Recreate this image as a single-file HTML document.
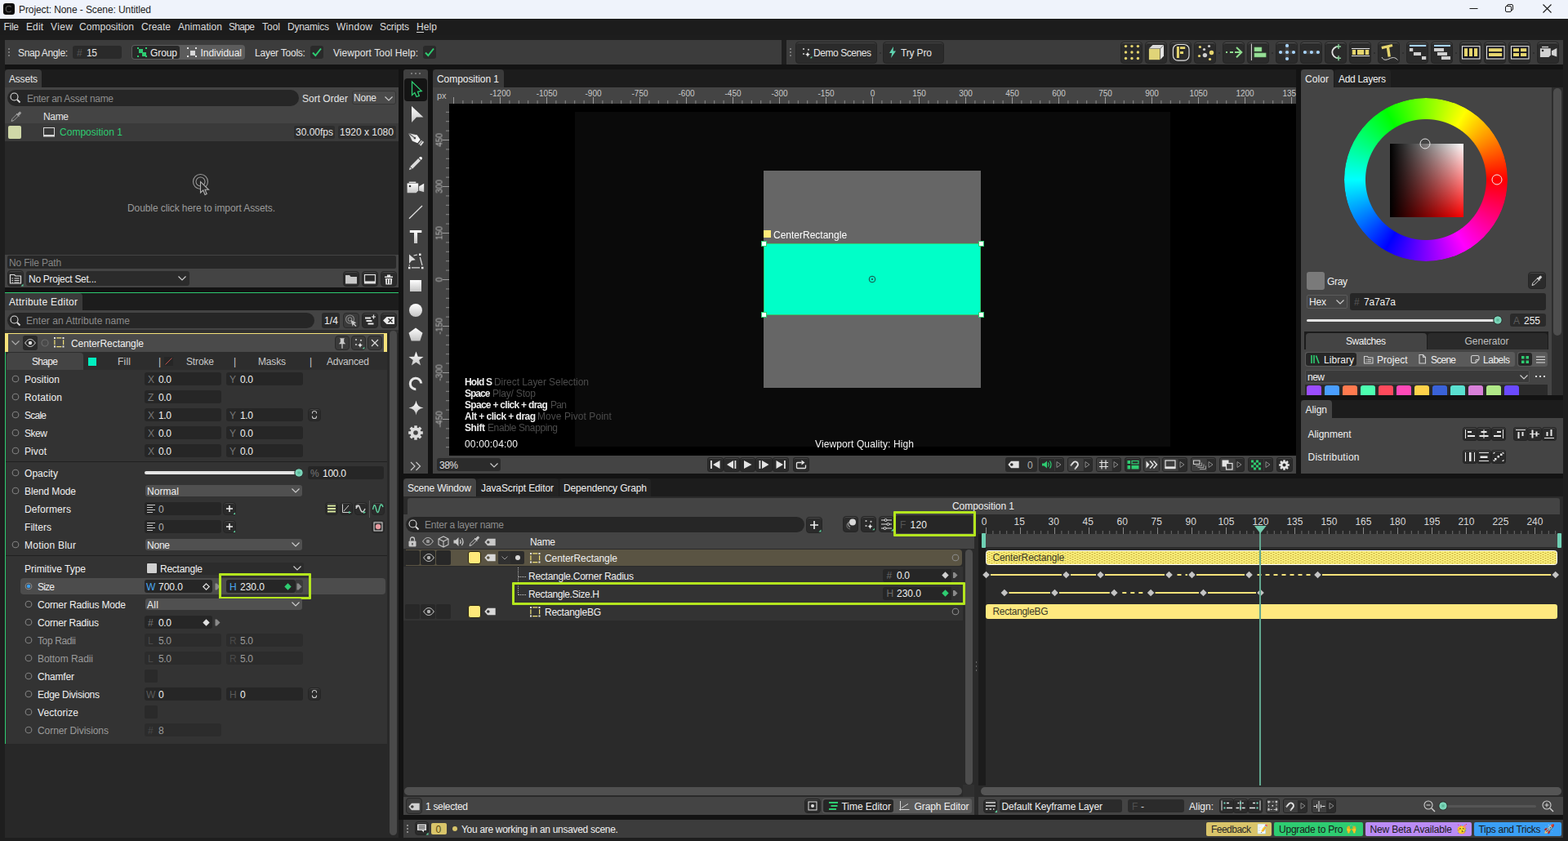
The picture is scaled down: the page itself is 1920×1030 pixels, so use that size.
<!DOCTYPE html>
<html lang="en"><head><meta charset="utf-8"><title>Project: None - Scene: Untitled</title>
<style>
html,body{margin:0;padding:0;}
body{width:1920px;height:1030px;overflow:hidden;background:#1e1e1e;position:relative;font-family:"Liberation Sans",sans-serif;font-size:12px;color:#e6e6e6;}
.a{position:absolute;}
.t{white-space:nowrap;}
svg{overflow:visible;}
</style></head>
<body>
<div class="a" style="left:0px;top:0px;width:1920px;height:23px;background:#eff3fb;"></div>
<svg class="a" style="left:4px;top:4px;" width="14" height="14" viewBox="0 0 14 14"><rect x="0" y="0" width="14" height="14" rx="3.2" fill="#0c0c0c"/><path d="M9.8 4.6 L8 3.4 L5 3.6 L3.4 5.4 L3.4 8.6 L5 10.4 L8 10.6 L9.8 9.4" fill="none" stroke="#505050" stroke-width="1.2"/></svg>
<div class="a t" style="left:23px;top:1px;height:23px;line-height:23px;color:#1a1a1a;letter-spacing:-0.09px;">Project: None - Scene: Untitled</div>
<svg class="a" style="left:1799px;top:5px;" width="12" height="12" viewBox="0 0 12 12"><path d="M0.5 5.5H10.5" stroke="#1a1a1a" stroke-width="1" fill="none"/></svg>
<svg class="a" style="left:1843px;top:5px;" width="12" height="12" viewBox="0 0 12 12"><rect x="0.5" y="2.5" width="7" height="7" rx="1.5" fill="none" stroke="#1a1a1a"/><path d="M2.5 2.5V2 Q2.5 0.5 4 0.5H8 Q9.5 0.5 9.5 2V6 Q9.5 7.5 8 7.5H7.5" fill="none" stroke="#1a1a1a"/></svg>
<svg class="a" style="left:1889px;top:5px;" width="12" height="12" viewBox="0 0 12 12"><path d="M0.5 0.5L10.5 10.5M10.5 0.5L0.5 10.5" stroke="#1a1a1a" stroke-width="1.1" fill="none"/></svg>
<div class="a" style="left:0px;top:23px;width:1920px;height:20px;background:#1c1c1c;"></div>
<div class="a" style="left:0px;top:43px;width:1920px;height:6px;background:#1d1d1d;"></div>
<div class="a" style="left:6px;top:79px;width:1908px;height:925px;background:#131313;"></div>
<div class="a t" style="left:4.5px;top:23px;height:20px;line-height:20px;color:#dcdcdc;letter-spacing:-0.28px;">File</div>
<div class="a t" style="left:32px;top:23px;height:20px;line-height:20px;color:#dcdcdc;letter-spacing:0.11px;">Edit</div>
<div class="a t" style="left:62px;top:23px;height:20px;line-height:20px;color:#dcdcdc;letter-spacing:0.40px;">View</div>
<div class="a t" style="left:97px;top:23px;height:20px;line-height:20px;color:#dcdcdc;letter-spacing:0.03px;">Composition</div>
<div class="a t" style="left:173px;top:23px;height:20px;line-height:20px;color:#dcdcdc;letter-spacing:-0.00px;">Create</div>
<div class="a t" style="left:218px;top:23px;height:20px;line-height:20px;color:#dcdcdc;letter-spacing:0.08px;">Animation</div>
<div class="a t" style="left:280px;top:23px;height:20px;line-height:20px;color:#dcdcdc;letter-spacing:-0.68px;">Shape</div>
<div class="a t" style="left:321px;top:23px;height:20px;line-height:20px;color:#dcdcdc;letter-spacing:-0.00px;">Tool</div>
<div class="a t" style="left:352px;top:23px;height:20px;line-height:20px;color:#dcdcdc;letter-spacing:-0.24px;">Dynamics</div>
<div class="a t" style="left:412px;top:23px;height:20px;line-height:20px;color:#dcdcdc;letter-spacing:0.26px;">Window</div>
<div class="a t" style="left:465px;top:23px;height:20px;line-height:20px;color:#dcdcdc;letter-spacing:-0.11px;">Scripts</div>
<div class="a t" style="left:510px;top:23px;height:20px;line-height:20px;color:#dcdcdc;letter-spacing:0.11px;">Help</div>
<div class="a" style="left:510px;top:39px;width:9px;height:1px;background:#dcdcdc;"></div>
<div class="a" style="left:6px;top:49px;width:951px;height:30px;background:#3c3c3c;"></div>
<div class="a" style="left:10px;top:59px;width:2px;height:2px;background:#777;"></div>
<div class="a" style="left:10px;top:63px;width:2px;height:2px;background:#777;"></div>
<div class="a" style="left:10px;top:67px;width:2px;height:2px;background:#777;"></div>
<div class="a t" style="left:22px;top:50px;height:30px;line-height:30px;color:#e6e6e6;letter-spacing:-0.37px;">Snap Angle:</div>
<div class="a" style="left:89px;top:56px;width:60px;height:16px;background:#2a2a2a;border-radius:3px;"></div>
<div class="a t" style="left:94px;top:57px;height:16px;line-height:16px;color:#5a5a5a;">#</div>
<div class="a t" style="left:106px;top:57px;height:16px;line-height:16px;color:#e6e6e6;letter-spacing:-0.35px;">15</div>
<div class="a" style="left:161px;top:55px;width:139px;height:18px;background:#5c5c5c;border-radius:4px;"></div>
<div class="a" style="left:162px;top:56px;width:58px;height:16px;background:#282828;border-radius:3px;"></div>
<div class="a" style="left:167.5px;top:58px;width:2px;height:2px;background:#2ecc71;"></div>
<div class="a" style="left:177.5px;top:58px;width:2px;height:2px;background:#2ecc71;"></div>
<div class="a" style="left:167.5px;top:68px;width:2px;height:2px;background:#2ecc71;"></div>
<div class="a" style="left:177.5px;top:68px;width:2px;height:2px;background:#2ecc71;"></div>
<div class="a" style="left:169.5px;top:59.5px;width:5px;height:5px;background:#2ecc71;"></div>
<div class="a" style="left:173.5px;top:63.5px;width:5px;height:5px;background:#2ecc71;"></div>
<div class="a t" style="left:184px;top:56px;height:18px;line-height:18px;color:#f0f0f0;letter-spacing:-0.09px;">Group</div>
<div class="a" style="left:229px;top:58px;width:2px;height:2px;background:#e0e0e0;"></div>
<div class="a" style="left:239px;top:58px;width:2px;height:2px;background:#e0e0e0;"></div>
<div class="a" style="left:229px;top:68px;width:2px;height:2px;background:#e0e0e0;"></div>
<div class="a" style="left:239px;top:68px;width:2px;height:2px;background:#e0e0e0;"></div>
<div class="a" style="left:232.5px;top:61.5px;width:6px;height:6px;background:#d8d8d8;"></div>
<div class="a t" style="left:245.5px;top:56px;height:18px;line-height:18px;color:#f0f0f0;letter-spacing:-0.02px;">Individual</div>
<div class="a t" style="left:312px;top:50px;height:30px;line-height:30px;color:#e6e6e6;letter-spacing:-0.23px;">Layer Tools:</div>
<div class="a" style="left:380px;top:56px;width:16px;height:16px;background:#2a2a2a;border-radius:3px;"></div>
<svg class="a" style="left:380px;top:56px;" width="16" height="16" viewBox="0 0 16 16"><path d="M3 8.5L6.3 12L13 3.5" fill="none" stroke="#2ecc71" stroke-width="2"/></svg>
<div class="a t" style="left:408px;top:50px;height:30px;line-height:30px;color:#e6e6e6;letter-spacing:0.06px;">Viewport Tool Help:</div>
<div class="a" style="left:518px;top:56px;width:16px;height:16px;background:#2a2a2a;border-radius:3px;"></div>
<svg class="a" style="left:518px;top:56px;" width="16" height="16" viewBox="0 0 16 16"><path d="M3 8.5L6.3 12L13 3.5" fill="none" stroke="#2ecc71" stroke-width="2"/></svg>
<div class="a" style="left:963px;top:49px;width:951px;height:30px;background:#3c3c3c;"></div>
<div class="a" style="left:967px;top:59px;width:2px;height:2px;background:#777;"></div>
<div class="a" style="left:967px;top:63px;width:2px;height:2px;background:#777;"></div>
<div class="a" style="left:967px;top:67px;width:2px;height:2px;background:#777;"></div>
<div class="a" style="left:974px;top:51px;width:100px;height:27px;background:#2b2b2b;border-radius:4px;border:1px solid #252525;box-sizing:border-box;box-shadow:inset 0 1px 0 rgba(255,255,255,0.13);"></div>
<svg class="a" style="left:978px;top:55px;" width="18" height="18" viewBox="0 0 18 18"><circle cx="6" cy="5" r="1.100" fill="#c8c8c8"/><circle cx="12" cy="5.800" r="1.100" fill="#c8c8c8"/><circle cx="6" cy="11" r="1.100" fill="#c8c8c8"/><path d="M11 8.200Q11.400 11.300 14.500 11.700Q11.400 12.100 11 15.200Q10.600 12.100 7.500 11.700Q10.600 11.300 11 8.200z" fill="#e8e8e8"/><path d="M16.300 16.300h-2.600l2.600-2.600z" fill="#5fd3a0"/></svg>
<div class="a t" style="left:996px;top:52px;height:27px;line-height:27px;color:#e6e6e6;letter-spacing:-0.44px;">Demo Scenes</div>
<div class="a" style="left:1077px;top:64px;width:2px;height:2px;background:#2a2a2a;border-radius:1px;"></div>
<div class="a" style="left:1081px;top:51px;width:75px;height:27px;background:#2b2b2b;border-radius:4px;border:1px solid #252525;box-sizing:border-box;box-shadow:inset 0 1px 0 rgba(255,255,255,0.13);"></div>
<svg class="a" style="left:1088px;top:57px;" width="10" height="14" viewBox="0 0 10 14"><path d="M6 0L1 8h3.2L3 14L9 5.5H5.6z" fill="#5fd3b0"/></svg>
<div class="a t" style="left:1103px;top:52px;height:27px;line-height:27px;color:#e6e6e6;letter-spacing:-0.15px;">Try Pro</div>
<div class="a" style="left:1372px;top:51px;width:27px;height:27px;background:#2b2b2b;border-radius:4px;border:1px solid #252525;box-sizing:border-box;box-shadow:inset 0 1px 0 rgba(255,255,255,0.22);"></div>
<svg class="a" style="left:1372px;top:51px;" width="27" height="27" viewBox="0 0 27 27"><circle cx="6.50" cy="5.60" r="1.700" fill="#e6d56e"/><circle cx="6.50" cy="13.05" r="1.700" fill="#e6d56e"/><circle cx="6.50" cy="20.50" r="1.700" fill="#e6d56e"/><circle cx="13.95" cy="5.60" r="1.700" fill="#e6d56e"/><circle cx="13.95" cy="13.05" r="1.700" fill="#e6d56e"/><circle cx="13.95" cy="20.50" r="1.700" fill="#e6d56e"/><circle cx="21.40" cy="5.60" r="1.700" fill="#e6d56e"/><circle cx="21.40" cy="13.05" r="1.700" fill="#e6d56e"/><circle cx="21.40" cy="20.50" r="1.700" fill="#e6d56e"/></svg>
<div class="a" style="left:1402px;top:51px;width:27px;height:27px;background:#2b2b2b;border-radius:4px;border:1px solid #252525;box-sizing:border-box;box-shadow:inset 0 1px 0 rgba(255,255,255,0.22);"></div>
<svg class="a" style="left:1402px;top:51px;" width="27" height="27" viewBox="0 0 27 27"><path d="M4.900 8.500L9.500 4H23L18.500 8.500z" fill="#dadada"/><path d="M18.800 8.800L23 4.500V17.500L18.800 22z" fill="#e4e4e4"/><rect x="4.900" y="8.850" width="13.300" height="13.350" fill="#e0d478"/></svg>
<div class="a" style="left:1432px;top:51px;width:27px;height:27px;background:#2b2b2b;border-radius:4px;border:1px solid #252525;box-sizing:border-box;box-shadow:inset 0 1px 0 rgba(255,255,255,0.22);"></div>
<svg class="a" style="left:1432px;top:51px;" width="27" height="27" viewBox="0 0 27 27"><rect x="4.400" y="3.500" width="19.600" height="19.600" rx="6" fill="none" stroke="#e4e4e4" stroke-width="1.100"/><path d="M8.900 6h3v14h-3z M13 6.200h6.200v2.900h-6.200z M13 12h4v3h-4z" fill="#e6d56e"/></svg>
<div class="a" style="left:1462px;top:51px;width:27px;height:27px;background:#2b2b2b;border-radius:4px;border:1px solid #252525;box-sizing:border-box;box-shadow:inset 0 1px 0 rgba(255,255,255,0.22);"></div>
<svg class="a" style="left:1462px;top:51px;" width="27" height="27" viewBox="0 0 27 27"><circle cx="7.400" cy="6.500" r="1.600" fill="#e6d56e"/><circle cx="18.500" cy="5.500" r="1.600" fill="#cfcfcf"/><circle cx="12.500" cy="9.500" r="1.600" fill="#cfcfcf"/><circle cx="21.500" cy="13.500" r="2.700" fill="#e6d56e"/><circle cx="13.400" cy="16.600" r="2.700" fill="#cfcfcf"/><circle cx="6.500" cy="17.500" r="1.600" fill="#e6d56e"/><circle cx="19.500" cy="21.500" r="1.600" fill="#e6d56e"/></svg>
<div class="a" style="left:1492px;top:64px;width:2px;height:2px;background:#2a2a2a;border-radius:1px;"></div>
<div class="a" style="left:1497px;top:51px;width:27px;height:27px;background:#2b2b2b;border-radius:4px;border:1px solid #252525;box-sizing:border-box;box-shadow:inset 0 1px 0 rgba(255,255,255,0.22);"></div>
<svg class="a" style="left:1497px;top:51px;" width="27" height="27" viewBox="0 0 27 27"><path d="M4 13h2M9 13h4M15 13h7.500" stroke="#8fdc8f" stroke-width="1.800" fill="none"/><path d="M17 7L23.300 13L17 19.300" stroke="#8fdc8f" stroke-width="2" fill="none"/></svg>
<div class="a" style="left:1527px;top:51px;width:27px;height:27px;background:#2b2b2b;border-radius:4px;border:1px solid #252525;box-sizing:border-box;box-shadow:inset 0 1px 0 rgba(255,255,255,0.22);"></div>
<svg class="a" style="left:1527px;top:51px;" width="27" height="27" viewBox="0 0 27 27"><path d="M5.400 2.700v20.300" stroke="#e4e4e4" stroke-width="1"/><rect x="8.900" y="6.900" width="9.100" height="5.100" fill="#98e098" stroke="#5a9a5a" stroke-width="0.500"/><rect x="8.900" y="13.900" width="14.300" height="5.100" fill="#98e098" stroke="#5a9a5a" stroke-width="0.500"/></svg>
<div class="a" style="left:1557px;top:64px;width:2px;height:2px;background:#2a2a2a;border-radius:1px;"></div>
<div class="a" style="left:1562px;top:51px;width:27px;height:27px;background:#2b2b2b;border-radius:4px;border:1px solid #252525;box-sizing:border-box;box-shadow:inset 0 1px 0 rgba(255,255,255,0.22);"></div>
<svg class="a" style="left:1562px;top:51px;" width="27" height="27" viewBox="0 0 27 27"><path d="M11.800 5h4.400v5.800h6v4.400h-6v5.800h-4.400v-5.800h-6v-4.400h6z" fill="#404040"/><circle cx="14" cy="4.900" r="2.100" fill="#a8d4fc"/><circle cx="14" cy="13" r="2.100" fill="#a8d4fc"/><circle cx="14" cy="21" r="2.100" fill="#a8d4fc"/><circle cx="6" cy="13" r="2.100" fill="#a8d4fc"/><circle cx="22" cy="13" r="2.100" fill="#a8d4fc"/></svg>
<div class="a" style="left:1592px;top:51px;width:27px;height:27px;background:#2b2b2b;border-radius:4px;border:1px solid #252525;box-sizing:border-box;box-shadow:inset 0 1px 0 rgba(255,255,255,0.22);"></div>
<svg class="a" style="left:1592px;top:51px;" width="27" height="27" viewBox="0 0 27 27"><rect x="5" y="10.800" width="18" height="4.400" rx="2" fill="#404040"/><circle cx="5.900" cy="13" r="2.100" fill="#a8d4fc"/><circle cx="13.900" cy="13" r="2.100" fill="#a8d4fc"/><circle cx="21.900" cy="13" r="2.100" fill="#a8d4fc"/></svg>
<div class="a" style="left:1622px;top:51px;width:27px;height:27px;background:#2b2b2b;border-radius:4px;border:1px solid #252525;box-sizing:border-box;box-shadow:inset 0 1px 0 rgba(255,255,255,0.22);"></div>
<svg class="a" style="left:1622px;top:51px;" width="27" height="27" viewBox="0 0 27 27"><path d="M17 5.900A7.700 7.150 0 0 0 17 20.200" fill="none" stroke="#e4e4e4" stroke-width="1.800"/><path d="M17 2.900v6M14 5.900h6M17 17.200v6M14 20.200h6" stroke="#88cc98" stroke-width="1.500" fill="none"/></svg>
<div class="a" style="left:1652px;top:51px;width:27px;height:27px;background:#2b2b2b;border-radius:4px;border:1px solid #252525;box-sizing:border-box;box-shadow:inset 0 1px 0 rgba(255,255,255,0.22);"></div>
<svg class="a" style="left:1652px;top:51px;" width="27" height="27" viewBox="0 0 27 27"><path d="M3 8.500h22.200M3 17.500h22.200" stroke="#e4e4e4" stroke-width="1.100"/><rect x="3.800" y="10" width="4.200" height="6" fill="#e6d56e"/><rect x="10" y="10" width="8.100" height="6" fill="#e6d56e"/><rect x="19.800" y="10" width="4.400" height="6" fill="#e6d56e"/></svg>
<div class="a" style="left:1682px;top:64px;width:2px;height:2px;background:#2a2a2a;border-radius:1px;"></div>
<div class="a" style="left:1687px;top:51px;width:27px;height:27px;background:#2b2b2b;border-radius:4px;border:1px solid #252525;box-sizing:border-box;box-shadow:inset 0 1px 0 rgba(255,255,255,0.22);"></div>
<svg class="a" style="left:1687px;top:51px;" width="27" height="27" viewBox="0 0 27 27"><path d="M4.800 7.600L18 4.500" stroke="#e6d56e" stroke-width="3.200" fill="none"/><path d="M12.300 6L14.200 18.500" stroke="#e6d56e" stroke-width="3.400" fill="none"/><path d="M5 19C7 23 10 22.800 14 21S21 18.500 24.500 22.500" fill="none" stroke="#d8d8d8" stroke-width="1"/></svg>
<div class="a" style="left:1717px;top:64px;width:2px;height:2px;background:#2a2a2a;border-radius:1px;"></div>
<div class="a" style="left:1722px;top:51px;width:27px;height:27px;background:#2b2b2b;border-radius:4px;border:1px solid #252525;box-sizing:border-box;box-shadow:inset 0 1px 0 rgba(255,255,255,0.22);"></div>
<svg class="a" style="left:1722px;top:51px;" width="27" height="27" viewBox="0 0 27 27"><rect x="3.900" y="3.900" width="20.300" height="2.100" fill="#a8d4fc"/><rect x="3.900" y="8" width="4.300" height="3.900" fill="#cfcfcf"/><rect x="9" y="13" width="9" height="4" fill="#cfcfcf"/><rect x="19" y="18" width="5.200" height="4" fill="#cfcfcf"/></svg>
<div class="a" style="left:1752px;top:51px;width:27px;height:27px;background:#2b2b2b;border-radius:4px;border:1px solid #252525;box-sizing:border-box;box-shadow:inset 0 1px 0 rgba(255,255,255,0.22);"></div>
<svg class="a" style="left:1752px;top:51px;" width="27" height="27" viewBox="0 0 27 27"><rect x="4" y="3.900" width="20" height="2.100" fill="#a8d4fc"/><rect x="4" y="8" width="12" height="3.900" fill="#cfcfcf"/><rect x="8" y="13" width="12" height="4" fill="#cfcfcf"/><rect x="13" y="18" width="11" height="4" fill="#cfcfcf"/></svg>
<div class="a" style="left:1782px;top:64px;width:2px;height:2px;background:#2a2a2a;border-radius:1px;"></div>
<div class="a" style="left:1787px;top:51px;width:27px;height:27px;background:#2b2b2b;border-radius:4px;border:1px solid #252525;box-sizing:border-box;box-shadow:inset 0 1px 0 rgba(255,255,255,0.22);"></div>
<svg class="a" style="left:1787px;top:51px;" width="27" height="27" viewBox="0 0 27 27"><rect x="3.500" y="5.700" width="21.500" height="15.300" fill="#15151f" stroke="#e4e4e4" stroke-width="1.100"/><rect x="6" y="8.200" width="4" height="9.800" fill="#e6d56e"/><rect x="12" y="8.200" width="4" height="9.800" fill="#e6d56e"/><rect x="18" y="8.200" width="4.200" height="9.800" fill="#e6d56e"/></svg>
<div class="a" style="left:1817px;top:51px;width:27px;height:27px;background:#2b2b2b;border-radius:4px;border:1px solid #252525;box-sizing:border-box;box-shadow:inset 0 1px 0 rgba(255,255,255,0.22);"></div>
<svg class="a" style="left:1817px;top:51px;" width="27" height="27" viewBox="0 0 27 27"><rect x="3.500" y="5.700" width="21.500" height="15.300" fill="#15151f" stroke="#e4e4e4" stroke-width="1.100"/><rect x="6" y="8.200" width="16.200" height="4" fill="#e6d56e"/><rect x="6" y="14" width="16.200" height="4" fill="#e6d56e"/></svg>
<div class="a" style="left:1847px;top:51px;width:27px;height:27px;background:#2b2b2b;border-radius:4px;border:1px solid #252525;box-sizing:border-box;box-shadow:inset 0 1px 0 rgba(255,255,255,0.22);"></div>
<svg class="a" style="left:1847px;top:51px;" width="27" height="27" viewBox="0 0 27 27"><rect x="3.500" y="5.700" width="21.500" height="15.300" fill="#15151f" stroke="#e4e4e4" stroke-width="1.100"/><rect x="6" y="8.200" width="7" height="4" fill="#e6d56e"/><rect x="15" y="8.200" width="7.200" height="4" fill="#e6d56e"/><rect x="6" y="14" width="7" height="4" fill="#e6d56e"/><rect x="15" y="14" width="7.200" height="4" fill="#e6d56e"/></svg>
<div class="a" style="left:1877px;top:64px;width:2px;height:2px;background:#2a2a2a;border-radius:1px;"></div>
<div class="a" style="left:1882px;top:51px;width:27px;height:27px;background:#2b2b2b;border-radius:4px;border:1px solid #252525;box-sizing:border-box;box-shadow:inset 0 1px 0 rgba(255,255,255,0.22);"></div>
<svg class="a" style="left:1882px;top:51px;" width="27" height="27" viewBox="0 0 27 27"><path d="M3.900 8.200h12.900v8.300l-2.400 2.500H3.900z" fill="#d2d2d2"/><path d="M18 11.300L24.300 7.900V18.600L18 16.200z" fill="#d2d2d2"/><rect x="6" y="5.900" width="8" height="1.300" fill="#d2d2d2"/><circle cx="7" cy="11" r="1.300" fill="#2b2b2b"/></svg>
<div class="a" style="left:6px;top:85px;width:482px;height:22px;background:#1c1c1c;"></div>
<div class="a" style="left:6px;top:85px;width:45px;height:22px;background:#3a3a3a;border-radius:4px 4px 0 0;"></div>
<div class="a t" style="left:11px;top:86px;height:22px;line-height:22px;color:#e6e6e6;letter-spacing:-0.20px;">Assets</div>
<div class="a" style="left:6px;top:107px;width:482px;height:45px;background:#444444;"></div>
<div class="a" style="left:9px;top:110px;width:357px;height:20px;background:#262626;border-radius:10px;"></div>
<svg class="a" style="left:12px;top:113px;" width="14" height="14" viewBox="0 0 14 14"><circle cx="5.500" cy="5.500" r="4.5" fill="none" stroke="#e0e0e0" stroke-width="1.1"/><path d="M9 9L12.5 12.5" stroke="#e0e0e0" stroke-width="1.8"/></svg>
<div class="a t" style="left:33px;top:111px;height:20px;line-height:20px;color:#8c8c8c;letter-spacing:-0.30px;">Enter an Asset name</div>
<div class="a t" style="left:370px;top:111px;height:20px;line-height:20px;color:#e6e6e6;letter-spacing:-0.00px;">Sort Order</div>
<div class="a" style="left:430.5px;top:111.3px;width:54px;height:17.2px;background:#4a4a4a;border-radius:3px;border:1px solid #353535;box-sizing:border-box;"></div>
<div class="a t" style="left:433px;top:111px;height:19px;line-height:19px;color:#e6e6e6;letter-spacing:-0.23px;">None</div>
<svg class="a" style="left:471px;top:117.5px;" width="10" height="6" viewBox="0 0 10 6"><path d="M0.5 0.5L5 5L9.5 0.5" fill="none" stroke="#d0d0d0" stroke-width="1.1"/></svg>
<svg class="a" style="left:13px;top:136px;" width="14" height="14" viewBox="0 0 14 14"><path d="M1 12.5L2 9.5L7.5 4L9.5 6L4 11.5z" fill="none" stroke="#a0a0a0" stroke-width="1"/><path d="M7 3L10.5 6.5M8.200 4.300L10.500 1.500Q11.500 0.800 12.300 1.700Q13 2.600 12 3.500L9.500 5.800z" fill="#a0a0a0" stroke="#a0a0a0" stroke-width="1"/></svg>
<div class="a t" style="left:53px;top:133px;height:20px;line-height:20px;color:#e6e6e6;letter-spacing:-0.34px;">Name</div>
<div class="a" style="left:6px;top:151px;width:482px;height:22px;background:#3a3a3a;"></div>
<div class="a" style="left:10px;top:154px;width:16px;height:16px;background:#d0d8a8;border-radius:2px;"></div>
<svg class="a" style="left:53px;top:156px;" width="15" height="12" viewBox="0 0 15 12"><rect x="0.5" y="0.5" width="13" height="9" fill="none" stroke="#d8d8d8" stroke-width="1"/><rect x="0" y="9" width="14" height="2.500" fill="#d8d8d8"/></svg>
<div class="a t" style="left:73px;top:152px;height:21px;line-height:21px;color:#2ecc71;letter-spacing:0.02px;">Composition 1</div>
<div class="a" style="left:360px;top:154px;width:50px;height:16px;background:#2d2d2d;border-radius:2px;"></div>
<div class="a t" style="left:362px;top:154px;height:17px;line-height:17px;color:#e6e6e6;letter-spacing:-0.01px;">30.00fps</div>
<div class="a" style="left:414px;top:154px;width:71px;height:16px;background:#2d2d2d;border-radius:2px;"></div>
<div class="a t" style="left:416px;top:154px;height:17px;line-height:17px;color:#e6e6e6;letter-spacing:-0.01px;">1920 x 1080</div>
<div class="a" style="left:6px;top:173px;width:482px;height:139px;background:#282828;"></div>
<svg class="a" style="left:235px;top:212px;" width="24" height="30" viewBox="0 0 24 30"><circle cx="10.5" cy="10.5" r="9" fill="none" stroke="#9a9a9a" stroke-width="1.1"/><circle cx="10.5" cy="10.5" r="5.500" fill="none" stroke="#9a9a9a" stroke-width="1.1"/><path d="M10.5 10.500V24L13.800 21L16 26.500L18.200 25.500L16 20.300H20.500z" fill="#2a2a2a" stroke="#b0b0b0" stroke-width="1.1"/></svg>
<div class="a t" style="left:156px;top:245px;height:20px;line-height:20px;color:#9a9a9a;letter-spacing:-0.09px;">Double click here to import Assets.</div>
<div class="a" style="left:6px;top:312px;width:482px;height:40px;background:#444444;"></div>
<div class="a" style="left:9px;top:313px;width:476px;height:16px;background:#272727;border-radius:2px;"></div>
<div class="a t" style="left:11px;top:314px;height:17px;line-height:17px;color:#858585;letter-spacing:-0.18px;">No File Path</div>
<div class="a" style="left:9px;top:331px;width:20px;height:20px;background:#2b2b2b;border-radius:4px;border:1px solid #252525;box-sizing:border-box;box-shadow:inset 0 1px 0 rgba(255,255,255,0.13);"></div>
<svg class="a" style="left:9px;top:331px;" width="20" height="20" viewBox="0 0 20 20"><path d="M3.5 5.500h5l1.500 1.500h6.500v9h-13z" fill="none" stroke="#e0e0e0" stroke-width="1.2"/><path d="M5.500 10h1.500M8.500 10h6M5.500 12.500h1.500M8.500 12.500h6M5.500 15h1.500M8.500 15h6" stroke="#e0e0e0" stroke-width="1.2"/><path d="M19.500 19.500h-3l3-3z" fill="#5fd3a0"/></svg>
<div class="a" style="left:32px;top:332px;width:200px;height:18px;background:#2b2b2b;border-radius:3px;"></div>
<div class="a t" style="left:35px;top:333px;height:18px;line-height:18px;color:#f0f0f0;letter-spacing:-0.27px;">No Project Set...</div>
<svg class="a" style="left:218px;top:338px;" width="10" height="6" viewBox="0 0 10 6"><path d="M0.5 0.5L5 5L9.5 0.5" fill="none" stroke="#d0d0d0" stroke-width="1.1"/></svg>
<div class="a" style="left:420px;top:332px;width:20px;height:19px;background:#2b2b2b;border-radius:4px;border:1px solid #252525;box-sizing:border-box;box-shadow:inset 0 1px 0 rgba(255,255,255,0.13);"></div>
<svg class="a" style="left:420px;top:332px;" width="20" height="19" viewBox="0 0 20 19"><path d="M3 5h5l1.500 2h7.500v8.500h-14z" fill="#c8c8c8"/></svg>
<div class="a" style="left:443px;top:332px;width:20px;height:19px;background:#2b2b2b;border-radius:4px;border:1px solid #252525;box-sizing:border-box;box-shadow:inset 0 1px 0 rgba(255,255,255,0.13);"></div>
<svg class="a" style="left:443px;top:332px;" width="20" height="19" viewBox="0 0 20 19"><rect x="3.500" y="4.500" width="13" height="8.500" fill="none" stroke="#e0e0e0" stroke-width="1.2"/><rect x="3" y="13" width="14" height="2.500" fill="#e0e0e0"/></svg>
<div class="a" style="left:466px;top:332px;width:20px;height:19px;background:#2b2b2b;border-radius:4px;border:1px solid #252525;box-sizing:border-box;box-shadow:inset 0 1px 0 rgba(255,255,255,0.13);"></div>
<svg class="a" style="left:466px;top:332px;" width="20" height="19" viewBox="0 0 20 19"><path d="M5 6.500h10v1.500h-10zM8 4.500h4v2h-4zM5.800 9h8.400l-0.600 7.500h-7.200z" fill="#e0e0e0"/><path d="M8.500 10v5.500M11.500 10v5.500" stroke="#2b2b2b" stroke-width="1"/></svg>
<div class="a" style="left:6px;top:357.7px;width:482px;height:1.5px;background:#2ecc71;"></div>
<div class="a" style="left:6px;top:359px;width:482px;height:21px;background:#1c1c1c;"></div>
<div class="a" style="left:6px;top:359px;width:95px;height:21px;background:#3a3a3a;border-radius:0 4px 0 0;"></div>
<div class="a t" style="left:11px;top:360px;height:21px;line-height:21px;color:#f0f0f0;letter-spacing:0.31px;">Attribute Editor</div>
<div class="a" style="left:6px;top:380px;width:482px;height:24px;background:#444444;"></div>
<div class="a" style="left:6px;top:404px;width:482px;height:4px;background:#303030;"></div>
<div class="a" style="left:9px;top:383px;width:376px;height:19px;background:#262626;border-radius:10px;"></div>
<svg class="a" style="left:12px;top:386px;" width="14" height="14" viewBox="0 0 14 14"><circle cx="5.500" cy="5.500" r="4.5" fill="none" stroke="#e0e0e0" stroke-width="1.1"/><path d="M9 9L12.5 12.5" stroke="#e0e0e0" stroke-width="1.8"/></svg>
<div class="a t" style="left:32px;top:384px;height:19px;line-height:19px;color:#8c8c8c;letter-spacing:0.04px;">Enter an Attribute name</div>
<div class="a" style="left:394px;top:383px;width:22px;height:19px;background:#2a2a2a;border-radius:3px;"></div>
<div class="a t" style="left:397px;top:384px;height:19px;line-height:19px;color:#f0f0f0;letter-spacing:0.16px;">1/4</div>
<div class="a" style="left:420px;top:383px;width:20px;height:19px;background:#3a3a3a;border-radius:4px;border:1px solid #2a2a2a;box-sizing:border-box;"></div>
<svg class="a" style="left:420px;top:383px;" width="20" height="19" viewBox="0 0 20 19"><circle cx="8.500" cy="8" r="5" fill="none" stroke="#8c8c8c" stroke-width="1.100"/><circle cx="8.500" cy="8" r="2.300" fill="none" stroke="#8c8c8c" stroke-width="1.100"/><path d="M9.500 9L16.500 12.200L13.700 13.200L16.500 16L15.500 17L12.700 14.200L11.700 16.800z" fill="#c4c4c4"/></svg>
<div class="a" style="left:443px;top:383px;width:20px;height:19px;background:#2b2b2b;border-radius:4px;border:1px solid #252525;box-sizing:border-box;box-shadow:inset 0 1px 0 rgba(255,255,255,0.13);"></div>
<svg class="a" style="left:443px;top:383px;" width="20" height="19" viewBox="0 0 20 19"><path d="M4 6.500h7M5.500 10h7M7.500 13.500h7" stroke="#e8e8e8" stroke-width="1.800"/><path d="M14.500 2.500v5M12 5h5" stroke="#e8e8e8" stroke-width="1.200"/></svg>
<div class="a" style="left:466px;top:383px;width:20px;height:19px;background:#2b2b2b;border-radius:4px;border:1px solid #252525;box-sizing:border-box;box-shadow:inset 0 1px 0 rgba(255,255,255,0.13);"></div>
<svg class="a" style="left:466px;top:383px;" width="20" height="19" viewBox="0 0 20 19"><path d="M3 9.500L7.500 5h9.500v9h-9.500z" fill="#e8e8e8"/><path d="M9.500 7L14.500 12M14.500 7L9.500 12" stroke="#2b2b2b" stroke-width="1.400"/></svg>
<div class="a" style="left:6px;top:408px;width:482px;height:618px;background:#282828;"></div>
<div class="a" style="left:476.5px;top:405px;width:9.5px;height:618px;background:#4a4a4a;border-radius:5px;"></div>
<div class="a" style="left:6px;top:408px;width:468px;height:23px;background:#4a4a4a;border-left:4px solid #f5e27a;border-right:4px solid #f5e27a;border-top:1px solid #f5e27a;box-sizing:border-box;"></div>
<svg class="a" style="left:14px;top:417px;" width="10" height="6" viewBox="0 0 10 6"><path d="M0.5 0.5L5 5L9.5 0.5" fill="none" stroke="#b0b0b0" stroke-width="1.1"/></svg>
<div class="a" style="left:28px;top:411px;width:18px;height:18px;background:#2a2a2a;border-radius:3px;"></div>
<svg class="a" style="left:30px;top:415px;" width="14" height="10" viewBox="0 0 14 10"><path d="M0.700 5C3 1.300 5.500 0.500 7 0.500S11 1.300 13.300 5C11 8.700 8.500 9.500 7 9.500S3 8.700 0.700 5z" fill="none" stroke="#e0e0e0" stroke-width="1"/><circle cx="7" cy="5" r="2.200" fill="#e0e0e0"/></svg>
<svg class="a" style="left:50px;top:415px;" width="10" height="10" viewBox="0 0 10 10"><circle cx="5" cy="5" r="4" fill="none" stroke="#6a6a6a" stroke-width="1.200"/></svg>
<svg class="a" style="left:66px;top:413px;" width="13" height="13" viewBox="0 0 13 13"><path d="M3.200 0.900H9.300M3.200 11.600H9.300M0.900 3.200V9.300M11.600 3.200V9.300" fill="none" stroke="#f2e27a" stroke-width="1.200"/><rect x="0" y="0" width="2" height="2" fill="#e8e8e8"/><rect x="10.500" y="0" width="2" height="2" fill="#e8e8e8"/><rect x="0" y="10.500" width="2" height="2" fill="#e8e8e8"/><rect x="10.500" y="10.500" width="2" height="2" fill="#e8e8e8"/></svg>
<div class="a t" style="left:87px;top:409px;height:24px;line-height:24px;color:#f0f0f0;letter-spacing:-0.08px;">CenterRectangle</div>
<div class="a" style="left:410px;top:411px;width:18px;height:18px;background:#3a3a3a;border-radius:4px;border:1px solid #2a2a2a;box-sizing:border-box;"></div>
<svg class="a" style="left:410px;top:411px;" width="18" height="18" viewBox="0 0 18 18"><path d="M6 3.300h6l-0.800 1.200v3.500l2 2.300h-8.400l2-2.300v-3.500z" fill="#c8c8c8"/><path d="M9 10v5.800" stroke="#c8c8c8" stroke-width="1.300"/></svg>
<div class="a" style="left:430px;top:411px;width:18px;height:18px;background:#3a3a3a;border-radius:4px;border:1px solid #2a2a2a;box-sizing:border-box;"></div>
<svg class="a" style="left:430px;top:411px;" width="18" height="18" viewBox="0 0 18 18"><circle cx="6" cy="5" r="1.100" fill="#c8c8c8"/><circle cx="12" cy="5.800" r="1.100" fill="#c8c8c8"/><circle cx="6" cy="11" r="1.100" fill="#c8c8c8"/><path d="M11 8.200Q11.400 11.300 14.500 11.700Q11.400 12.100 11 15.200Q10.600 12.100 7.500 11.700Q10.600 11.300 11 8.200z" fill="#e8e8e8"/><path d="M16.300 16.300h-2.600l2.600-2.600z" fill="#5fd3a0"/></svg>
<div class="a" style="left:450px;top:411px;width:18px;height:18px;background:#3a3a3a;border-radius:4px;border:1px solid #2a2a2a;box-sizing:border-box;"></div>
<svg class="a" style="left:450px;top:411px;" width="18" height="18" viewBox="0 0 18 18"><path d="M5 5L13 13M13 5L5 13" stroke="#e0e0e0" stroke-width="1.100"/></svg>
<div class="a" style="left:7px;top:431px;width:467px;height:22px;background:#2d2d2d;"></div>
<div class="a" style="left:8px;top:432px;width:94px;height:21px;background:#444444;border-radius:4px 4px 0 0;"></div>
<div class="a t" style="left:39px;top:433px;height:21px;line-height:21px;color:#f0f0f0;letter-spacing:-0.68px;">Shape</div>
<div class="a" style="left:108px;top:438px;width:10px;height:10px;background:#00f0c0;"></div>
<div class="a t" style="left:144px;top:433px;height:21px;line-height:21px;color:#c8c8c8;letter-spacing:0.22px;">Fill</div>
<div class="a t" style="left:194px;top:433px;height:21px;line-height:21px;color:#c8c8c8;">|</div>
<div class="a" style="left:201px;top:437px;width:11px;height:11px;background:#262626;border-radius:1px;"></div>
<svg class="a" style="left:201px;top:437px;" width="11" height="11" viewBox="0 0 11 11"><path d="M1.500 9.500L9.500 1.500" stroke="#c0504d" stroke-width="1"/></svg>
<div class="a t" style="left:228px;top:433px;height:21px;line-height:21px;color:#c8c8c8;letter-spacing:-0.14px;">Stroke</div>
<div class="a t" style="left:286px;top:433px;height:21px;line-height:21px;color:#c8c8c8;">|</div>
<div class="a t" style="left:316px;top:433px;height:21px;line-height:21px;color:#c8c8c8;letter-spacing:-0.17px;">Masks</div>
<div class="a t" style="left:379px;top:433px;height:21px;line-height:21px;color:#c8c8c8;">|</div>
<div class="a t" style="left:400px;top:433px;height:21px;line-height:21px;color:#c8c8c8;letter-spacing:-0.20px;">Advanced</div>
<div class="a" style="left:6px;top:431px;width:1px;height:480px;background:#2ecc71;"></div>
<div class="a" style="left:7px;top:453px;width:467px;height:458px;background:#333333;"></div>
<div class="a" style="left:7px;top:565px;width:467px;height:1px;background:#202020;"></div>
<div class="a" style="left:7px;top:680px;width:467px;height:1px;background:#202020;"></div>
<svg class="a" style="left:13.5px;top:459px;" width="10" height="10" viewBox="0 0 10 10"><circle cx="5" cy="5" r="3.800" fill="none" stroke="#808080" stroke-width="1.100"/></svg>
<div class="a t" style="left:30px;top:455px;height:20px;line-height:20px;color:#f0f0f0;letter-spacing:0.04px;">Position</div>
<div class="a" style="left:177px;top:456px;width:94px;height:16px;background:#262626;border-radius:3px;"></div>
<div class="a t" style="left:181px;top:457px;height:16px;line-height:16px;color:#777;">X</div>
<div class="a t" style="left:194px;top:457px;height:16px;line-height:16px;color:#f0f0f0;letter-spacing:-0.34px;">0.0</div>
<div class="a" style="left:277px;top:456px;width:94px;height:16px;background:#262626;border-radius:3px;"></div>
<div class="a t" style="left:281px;top:457px;height:16px;line-height:16px;color:#777;">Y</div>
<div class="a t" style="left:294px;top:457px;height:16px;line-height:16px;color:#f0f0f0;letter-spacing:-0.34px;">0.0</div>
<svg class="a" style="left:13.5px;top:481px;" width="10" height="10" viewBox="0 0 10 10"><circle cx="5" cy="5" r="3.800" fill="none" stroke="#808080" stroke-width="1.100"/></svg>
<div class="a t" style="left:30px;top:477px;height:20px;line-height:20px;color:#f0f0f0;letter-spacing:0.19px;">Rotation</div>
<div class="a" style="left:177px;top:478px;width:94px;height:16px;background:#262626;border-radius:3px;"></div>
<div class="a t" style="left:181px;top:479px;height:16px;line-height:16px;color:#777;">Z</div>
<div class="a t" style="left:194px;top:479px;height:16px;line-height:16px;color:#f0f0f0;letter-spacing:-0.34px;">0.0</div>
<svg class="a" style="left:13.5px;top:503px;" width="10" height="10" viewBox="0 0 10 10"><circle cx="5" cy="5" r="3.800" fill="none" stroke="#808080" stroke-width="1.100"/></svg>
<div class="a t" style="left:30px;top:499px;height:20px;line-height:20px;color:#f0f0f0;letter-spacing:-0.75px;">Scale</div>
<div class="a" style="left:177px;top:500px;width:94px;height:16px;background:#262626;border-radius:3px;"></div>
<div class="a t" style="left:181px;top:501px;height:16px;line-height:16px;color:#777;">X</div>
<div class="a t" style="left:194px;top:501px;height:16px;line-height:16px;color:#f0f0f0;letter-spacing:-0.34px;">1.0</div>
<div class="a" style="left:277px;top:500px;width:94px;height:16px;background:#262626;border-radius:3px;"></div>
<div class="a t" style="left:281px;top:501px;height:16px;line-height:16px;color:#777;">Y</div>
<div class="a t" style="left:294px;top:501px;height:16px;line-height:16px;color:#f0f0f0;letter-spacing:-0.34px;">1.0</div>
<svg class="a" style="left:13.5px;top:525px;" width="10" height="10" viewBox="0 0 10 10"><circle cx="5" cy="5" r="3.800" fill="none" stroke="#808080" stroke-width="1.100"/></svg>
<div class="a t" style="left:30px;top:521px;height:20px;line-height:20px;color:#f0f0f0;letter-spacing:-0.45px;">Skew</div>
<div class="a" style="left:177px;top:522px;width:94px;height:16px;background:#262626;border-radius:3px;"></div>
<div class="a t" style="left:181px;top:523px;height:16px;line-height:16px;color:#777;">X</div>
<div class="a t" style="left:194px;top:523px;height:16px;line-height:16px;color:#f0f0f0;letter-spacing:-0.34px;">0.0</div>
<div class="a" style="left:277px;top:522px;width:94px;height:16px;background:#262626;border-radius:3px;"></div>
<div class="a t" style="left:281px;top:523px;height:16px;line-height:16px;color:#777;">Y</div>
<div class="a t" style="left:294px;top:523px;height:16px;line-height:16px;color:#f0f0f0;letter-spacing:-0.34px;">0.0</div>
<svg class="a" style="left:13.5px;top:547px;" width="10" height="10" viewBox="0 0 10 10"><circle cx="5" cy="5" r="3.800" fill="none" stroke="#808080" stroke-width="1.100"/></svg>
<div class="a t" style="left:30px;top:543px;height:20px;line-height:20px;color:#f0f0f0;letter-spacing:0.08px;">Pivot</div>
<div class="a" style="left:177px;top:544px;width:94px;height:16px;background:#262626;border-radius:3px;"></div>
<div class="a t" style="left:181px;top:545px;height:16px;line-height:16px;color:#777;">X</div>
<div class="a t" style="left:194px;top:545px;height:16px;line-height:16px;color:#f0f0f0;letter-spacing:-0.34px;">0.0</div>
<div class="a" style="left:277px;top:544px;width:94px;height:16px;background:#262626;border-radius:3px;"></div>
<div class="a t" style="left:281px;top:545px;height:16px;line-height:16px;color:#777;">Y</div>
<div class="a t" style="left:294px;top:545px;height:16px;line-height:16px;color:#f0f0f0;letter-spacing:-0.34px;">0.0</div>
<div class="a" style="left:377px;top:500px;width:16px;height:16px;background:#2b2b2b;border-radius:4px;border:1px solid #252525;box-sizing:border-box;box-shadow:inset 0 1px 0 rgba(255,255,255,0.13);"></div>
<svg class="a" style="left:377px;top:500px;" width="16" height="16" viewBox="0 0 16 16"><path d="M5.500 6.500V5.500Q5.500 3.500 8 3.500Q10.500 3.500 10.500 5.500V6.500M5.500 9.500V10.500Q5.500 12.500 8 12.500Q10.500 12.500 10.500 10.500V9.500" fill="none" stroke="#c8c8c8" stroke-width="1.100"/></svg>
<svg class="a" style="left:13.5px;top:574px;" width="10" height="10" viewBox="0 0 10 10"><circle cx="5" cy="5" r="3.800" fill="none" stroke="#808080" stroke-width="1.100"/></svg>
<div class="a t" style="left:30px;top:570px;height:20px;line-height:20px;color:#f0f0f0;letter-spacing:0.05px;">Opacity</div>
<div class="a" style="left:177px;top:577px;width:189px;height:3.5px;background:#e4e4e4;border-radius:2px;"></div>
<svg class="a" style="left:360px;top:573px;" width="12" height="12" viewBox="0 0 12 12"><circle cx="6" cy="6" r="5.200" fill="#7ad4b8" stroke="#2a2a2a" stroke-width="1"/><circle cx="6" cy="6" r="1.800" fill="#5ab898"/></svg>
<div class="a" style="left:377px;top:571px;width:93px;height:16px;background:#262626;border-radius:3px;"></div>
<div class="a t" style="left:380px;top:572px;height:16px;line-height:16px;color:#777;">%</div>
<div class="a t" style="left:395px;top:572px;height:16px;line-height:16px;color:#f0f0f0;letter-spacing:-0.26px;">100.0</div>
<svg class="a" style="left:13.5px;top:596px;" width="10" height="10" viewBox="0 0 10 10"><circle cx="5" cy="5" r="3.800" fill="none" stroke="#808080" stroke-width="1.100"/></svg>
<div class="a t" style="left:30px;top:592px;height:20px;line-height:20px;color:#f0f0f0;letter-spacing:-0.12px;">Blend Mode</div>
<div class="a" style="left:177.8px;top:594px;width:192.5px;height:14.3px;background:#505050;border-radius:3px;"></div>
<div class="a t" style="left:180px;top:594px;height:16px;line-height:16px;color:#f0f0f0;letter-spacing:0.07px;">Normal</div>
<svg class="a" style="left:357px;top:598px;" width="10" height="6" viewBox="0 0 10 6"><path d="M0.5 0.5L5 5L9.5 0.5" fill="none" stroke="#d0d0d0" stroke-width="1.1"/></svg>
<div class="a t" style="left:30px;top:614px;height:20px;line-height:20px;color:#f0f0f0;letter-spacing:0.12px;">Deformers</div>
<div class="a" style="left:177px;top:615px;width:94px;height:16px;background:#262626;border-radius:3px;"></div>
<svg class="a" style="left:180px;top:618px;" width="10" height="11" viewBox="0 0 10 11"><path d="M0 0.500h10M0 3.500h7M0 6.500h10M0 9.500h7" stroke="#c8c8c8" stroke-width="1"/></svg>
<div class="a t" style="left:194px;top:616px;height:16px;line-height:16px;color:#b0b0b0;">0</div>
<div class="a" style="left:273px;top:615px;width:16px;height:16px;background:#2b2b2b;border-radius:4px;border:1px solid #252525;box-sizing:border-box;box-shadow:inset 0 1px 0 rgba(255,255,255,0.13);"></div>
<svg class="a" style="left:273px;top:615px;" width="16" height="16" viewBox="0 0 16 16"><path d="M8 4v8M4 8h8" stroke="#f0f0f0" stroke-width="1.500"/><path d="M15 15h-2.500l2.500-2.500z" fill="#5fd3a0"/></svg>
<div class="a t" style="left:30px;top:636px;height:20px;line-height:20px;color:#f0f0f0;letter-spacing:0.06px;">Filters</div>
<div class="a" style="left:177px;top:637px;width:94px;height:16px;background:#262626;border-radius:3px;"></div>
<svg class="a" style="left:180px;top:640px;" width="10" height="11" viewBox="0 0 10 11"><path d="M0 0.500h10M0 3.500h7M0 6.500h10M0 9.500h7" stroke="#c8c8c8" stroke-width="1"/></svg>
<div class="a t" style="left:194px;top:638px;height:16px;line-height:16px;color:#b0b0b0;">0</div>
<div class="a" style="left:273px;top:637px;width:16px;height:16px;background:#2b2b2b;border-radius:4px;border:1px solid #252525;box-sizing:border-box;box-shadow:inset 0 1px 0 rgba(255,255,255,0.13);"></div>
<svg class="a" style="left:273px;top:637px;" width="16" height="16" viewBox="0 0 16 16"><path d="M8 4v8M4 8h8" stroke="#f0f0f0" stroke-width="1.500"/><path d="M15 15h-2.500l2.500-2.500z" fill="#5fd3a0"/></svg>
<div class="a" style="left:398px;top:615px;width:16px;height:16px;background:#2b2b2b;border-radius:4px;border:1px solid #252525;box-sizing:border-box;box-shadow:inset 0 1px 0 rgba(255,255,255,0.13);"></div>
<svg class="a" style="left:398px;top:615px;" width="16" height="16" viewBox="0 0 16 16"><path d="M3 4.500h10M3 8h10M3 11.500h10" stroke="#d8e8a0" stroke-width="2"/></svg>
<div class="a" style="left:416px;top:615px;width:16px;height:16px;background:#2b2b2b;border-radius:4px;border:1px solid #252525;box-sizing:border-box;box-shadow:inset 0 1px 0 rgba(255,255,255,0.13);"></div>
<svg class="a" style="left:416px;top:615px;" width="16" height="16" viewBox="0 0 16 16"><path d="M3.500 2.500v10h10" fill="none" stroke="#d0d0d0" stroke-width="1"/><path d="M5 11L11 4" stroke="#d0d0d0" stroke-width="1"/><path d="M11 11l3 1.500-3 1.500z" fill="#5fd3a0"/></svg>
<div class="a" style="left:434px;top:615px;width:16px;height:16px;background:#2b2b2b;border-radius:4px;border:1px solid #252525;box-sizing:border-box;box-shadow:inset 0 1px 0 rgba(255,255,255,0.13);"></div>
<svg class="a" style="left:434px;top:615px;" width="16" height="16" viewBox="0 0 16 16"><path d="M2 8Q4.500 0 7 8T13 8" fill="none" stroke="#d0d0d0" stroke-width="1.400"/><circle cx="3" cy="5" r="1.600" fill="#d0d0d0"/><path d="M11 11l3 1.500-3 1.500z" fill="#5fd3a0"/></svg>
<div class="a" style="left:452px;top:613px;width:1px;height:21px;background:#5a5a5a;"></div>
<div class="a" style="left:455px;top:615px;width:16px;height:16px;background:#2b2b2b;border-radius:4px;border:1px solid #252525;box-sizing:border-box;box-shadow:inset 0 1px 0 rgba(255,255,255,0.13);"></div>
<svg class="a" style="left:455px;top:615px;" width="16" height="16" viewBox="0 0 16 16"><path d="M1.500 9Q3.500 -1 5.500 8T9.500 8T14 6" fill="none" stroke="#5fd3a0" stroke-width="1.400"/></svg>
<div class="a" style="left:455px;top:637px;width:16px;height:16px;background:#2b2b2b;border-radius:4px;border:1px solid #252525;box-sizing:border-box;box-shadow:inset 0 1px 0 rgba(255,255,255,0.13);"></div>
<svg class="a" style="left:455px;top:637px;" width="16" height="16" viewBox="0 0 16 16"><rect x="3" y="3" width="10" height="10" fill="none" stroke="#e0e0e0" stroke-width="1"/><circle cx="8" cy="8" r="3.200" fill="#e89aa0"/></svg>
<svg class="a" style="left:13.5px;top:662px;" width="10" height="10" viewBox="0 0 10 10"><circle cx="5" cy="5" r="3.800" fill="none" stroke="#808080" stroke-width="1.100"/></svg>
<div class="a t" style="left:30px;top:658px;height:20px;line-height:20px;color:#f0f0f0;letter-spacing:0.23px;">Motion Blur</div>
<div class="a" style="left:177.8px;top:660px;width:192.5px;height:14.3px;background:#505050;border-radius:3px;"></div>
<div class="a t" style="left:180px;top:660px;height:16px;line-height:16px;color:#f0f0f0;letter-spacing:-0.23px;">None</div>
<svg class="a" style="left:357px;top:664px;" width="10" height="6" viewBox="0 0 10 6"><path d="M0.5 0.5L5 5L9.5 0.5" fill="none" stroke="#d0d0d0" stroke-width="1.1"/></svg>
<div class="a t" style="left:30px;top:687px;height:20px;line-height:20px;color:#f0f0f0;letter-spacing:-0.01px;">Primitive Type</div>
<div class="a" style="left:178.5px;top:688.5px;width:193.5px;height:15px;background:#2c2c2c;border-radius:3px;"></div>
<div class="a" style="left:180px;top:690px;width:12px;height:12px;background:#d0d0d0;border-radius:1px;"></div>
<div class="a t" style="left:196px;top:689px;height:16px;line-height:16px;color:#f0f0f0;letter-spacing:-0.25px;">Rectangle</div>
<svg class="a" style="left:359px;top:693px;" width="10" height="6" viewBox="0 0 10 6"><path d="M0.5 0.5L5 5L9.5 0.5" fill="none" stroke="#d0d0d0" stroke-width="1.1"/></svg>
<div class="a" style="left:25px;top:708px;width:447px;height:20px;background:#4c4c4c;border-radius:4px;"></div>
<svg class="a" style="left:29.5px;top:713px;" width="10" height="10" viewBox="0 0 10 10"><circle cx="5" cy="5" r="3.800" fill="none" stroke="#8a8a8a" stroke-width="1.100"/><circle cx="5" cy="5" r="2.200" fill="#3aa0f0"/></svg>
<div class="a t" style="left:46px;top:709px;height:20px;line-height:20px;color:#f0f0f0;letter-spacing:-0.78px;">Size</div>
<div class="a" style="left:177px;top:710px;width:83px;height:16px;background:#262626;border-radius:3px;"></div>
<div class="a t" style="left:179px;top:711px;height:16px;line-height:16px;color:#4aa8f0;">W</div>
<div class="a t" style="left:194px;top:711px;height:16px;line-height:16px;color:#f0f0f0;letter-spacing:-0.01px;">700.0</div>
<svg class="a" style="left:248px;top:714px;" width="9" height="9" viewBox="0 0 9 9"><path d="M4.500 0.800L8.200 4.500L4.500 8.200L0.800 4.500z" fill="none" stroke="#e0e0e0" stroke-width="1.200"/></svg>
<svg class="a" style="left:263px;top:714px;" width="7" height="9" viewBox="0 0 7 9"><path d="M0.500 0.500h2l4 4-4 4h-2z" fill="#8a8a8a"/></svg>
<div class="a" style="left:277px;top:710px;width:85px;height:16px;background:#262626;border-radius:3px;"></div>
<div class="a t" style="left:281px;top:711px;height:16px;line-height:16px;color:#4aa8f0;">H</div>
<div class="a t" style="left:294px;top:711px;height:16px;line-height:16px;color:#f0f0f0;letter-spacing:-0.01px;">230.0</div>
<div class="a" style="left:362px;top:710px;width:9px;height:16px;background:#3a3a3a;border-radius:0 3px 3px 0;"></div>
<svg class="a" style="left:348px;top:714px;" width="9" height="9" viewBox="0 0 9 9"><path d="M4.500 0.300L8.700 4.500L4.500 8.700L0.300 4.500z" fill="#2ecc71"/></svg>
<svg class="a" style="left:363px;top:714px;" width="7" height="9" viewBox="0 0 7 9"><path d="M0.500 0.500h2l4 4-4 4h-2z" fill="#8a8a8a"/></svg>
<div class="a" style="left:268px;top:702px;width:113px;height:32px;border-radius:1px;border:3px solid #b4e61e;box-sizing:border-box;"></div>
<svg class="a" style="left:29.5px;top:735px;" width="10" height="10" viewBox="0 0 10 10"><circle cx="5" cy="5" r="3.800" fill="none" stroke="#808080" stroke-width="1.100"/></svg>
<div class="a t" style="left:46px;top:731px;height:20px;line-height:20px;color:#f0f0f0;letter-spacing:-0.16px;">Corner Radius Mode</div>
<div class="a" style="left:177.8px;top:733px;width:192.5px;height:14.3px;background:#505050;border-radius:3px;"></div>
<div class="a t" style="left:180px;top:733px;height:16px;line-height:16px;color:#f0f0f0;letter-spacing:0.33px;">All</div>
<svg class="a" style="left:357px;top:737px;" width="10" height="6" viewBox="0 0 10 6"><path d="M0.5 0.5L5 5L9.5 0.5" fill="none" stroke="#d0d0d0" stroke-width="1.1"/></svg>
<svg class="a" style="left:29.5px;top:757px;" width="10" height="10" viewBox="0 0 10 10"><circle cx="5" cy="5" r="3.800" fill="none" stroke="#808080" stroke-width="1.100"/></svg>
<div class="a t" style="left:46px;top:753px;height:20px;line-height:20px;color:#f0f0f0;letter-spacing:-0.20px;">Corner Radius</div>
<div class="a" style="left:177px;top:754px;width:83px;height:16px;background:#262626;border-radius:3px;"></div>
<div class="a t" style="left:181px;top:755px;height:16px;line-height:16px;color:#777;">#</div>
<div class="a t" style="left:194px;top:755px;height:16px;line-height:16px;color:#f0f0f0;letter-spacing:-0.34px;">0.0</div>
<svg class="a" style="left:248px;top:758px;" width="9" height="9" viewBox="0 0 9 9"><path d="M4.500 0.300L8.700 4.500L4.500 8.700L0.300 4.500z" fill="#e0e0e0"/></svg>
<svg class="a" style="left:263px;top:758px;" width="7" height="9" viewBox="0 0 7 9"><path d="M0.500 0.500h2l4 4-4 4h-2z" fill="#8a8a8a"/></svg>
<svg class="a" style="left:29.5px;top:779px;" width="10" height="10" viewBox="0 0 10 10"><circle cx="5" cy="5" r="3.800" fill="none" stroke="#808080" stroke-width="1.100"/></svg>
<div class="a t" style="left:46px;top:775px;height:20px;line-height:20px;color:#9a9a9a;letter-spacing:-0.38px;">Top Radii</div>
<div class="a" style="left:177px;top:776px;width:94px;height:16px;background:#2c2c2c;border-radius:3px;"></div>
<div class="a t" style="left:181px;top:777px;height:16px;line-height:16px;color:#4a4a4a;">L</div>
<div class="a t" style="left:194px;top:777px;height:16px;line-height:16px;color:#9a9a9a;letter-spacing:-0.34px;">5.0</div>
<div class="a" style="left:277px;top:776px;width:94px;height:16px;background:#2c2c2c;border-radius:3px;"></div>
<div class="a t" style="left:281px;top:777px;height:16px;line-height:16px;color:#4a4a4a;">R</div>
<div class="a t" style="left:294px;top:777px;height:16px;line-height:16px;color:#9a9a9a;letter-spacing:-0.34px;">5.0</div>
<svg class="a" style="left:29.5px;top:801px;" width="10" height="10" viewBox="0 0 10 10"><circle cx="5" cy="5" r="3.800" fill="none" stroke="#808080" stroke-width="1.100"/></svg>
<div class="a t" style="left:46px;top:797px;height:20px;line-height:20px;color:#9a9a9a;letter-spacing:-0.06px;">Bottom Radii</div>
<div class="a" style="left:177px;top:798px;width:94px;height:16px;background:#2c2c2c;border-radius:3px;"></div>
<div class="a t" style="left:181px;top:799px;height:16px;line-height:16px;color:#4a4a4a;">L</div>
<div class="a t" style="left:194px;top:799px;height:16px;line-height:16px;color:#9a9a9a;letter-spacing:-0.34px;">5.0</div>
<div class="a" style="left:277px;top:798px;width:94px;height:16px;background:#2c2c2c;border-radius:3px;"></div>
<div class="a t" style="left:281px;top:799px;height:16px;line-height:16px;color:#4a4a4a;">R</div>
<div class="a t" style="left:294px;top:799px;height:16px;line-height:16px;color:#9a9a9a;letter-spacing:-0.34px;">5.0</div>
<svg class="a" style="left:29.5px;top:823px;" width="10" height="10" viewBox="0 0 10 10"><circle cx="5" cy="5" r="3.800" fill="none" stroke="#808080" stroke-width="1.100"/></svg>
<div class="a t" style="left:46px;top:819px;height:20px;line-height:20px;color:#f0f0f0;letter-spacing:-0.17px;">Chamfer</div>
<div class="a" style="left:177px;top:820px;width:16px;height:16px;background:#2a2a2a;border-radius:2px;"></div>
<svg class="a" style="left:29.5px;top:845px;" width="10" height="10" viewBox="0 0 10 10"><circle cx="5" cy="5" r="3.800" fill="none" stroke="#808080" stroke-width="1.100"/></svg>
<div class="a t" style="left:46px;top:841px;height:20px;line-height:20px;color:#f0f0f0;letter-spacing:-0.26px;">Edge Divisions</div>
<div class="a" style="left:177px;top:842px;width:94px;height:16px;background:#262626;border-radius:3px;"></div>
<div class="a t" style="left:179px;top:843px;height:16px;line-height:16px;color:#5a5a5a;">W</div>
<div class="a t" style="left:194px;top:843px;height:16px;line-height:16px;color:#f0f0f0;">0</div>
<div class="a" style="left:277px;top:842px;width:94px;height:16px;background:#262626;border-radius:3px;"></div>
<div class="a t" style="left:281px;top:843px;height:16px;line-height:16px;color:#5a5a5a;">H</div>
<div class="a t" style="left:294px;top:843px;height:16px;line-height:16px;color:#f0f0f0;">0</div>
<div class="a" style="left:377px;top:842px;width:16px;height:16px;background:#2b2b2b;border-radius:4px;border:1px solid #252525;box-sizing:border-box;box-shadow:inset 0 1px 0 rgba(255,255,255,0.13);"></div>
<svg class="a" style="left:377px;top:842px;" width="16" height="16" viewBox="0 0 16 16"><path d="M5.500 6.500V5.500Q5.500 3.500 8 3.500Q10.500 3.500 10.500 5.500V6.500M5.500 9.500V10.500Q5.500 12.500 8 12.500Q10.500 12.500 10.500 10.500V9.500" fill="none" stroke="#c8c8c8" stroke-width="1.100"/></svg>
<svg class="a" style="left:29.5px;top:867px;" width="10" height="10" viewBox="0 0 10 10"><circle cx="5" cy="5" r="3.800" fill="none" stroke="#808080" stroke-width="1.100"/></svg>
<div class="a t" style="left:46px;top:863px;height:20px;line-height:20px;color:#f0f0f0;letter-spacing:0.08px;">Vectorize</div>
<div class="a" style="left:177px;top:864px;width:16px;height:16px;background:#2a2a2a;border-radius:2px;"></div>
<svg class="a" style="left:29.5px;top:889px;" width="10" height="10" viewBox="0 0 10 10"><circle cx="5" cy="5" r="3.800" fill="none" stroke="#808080" stroke-width="1.100"/></svg>
<div class="a t" style="left:46px;top:885px;height:20px;line-height:20px;color:#9a9a9a;letter-spacing:-0.07px;">Corner Divisions</div>
<div class="a" style="left:177px;top:886px;width:94px;height:16px;background:#2c2c2c;border-radius:3px;"></div>
<div class="a t" style="left:181px;top:887px;height:16px;line-height:16px;color:#4a4a4a;">#</div>
<div class="a t" style="left:194px;top:887px;height:16px;line-height:16px;color:#9a9a9a;">8</div>
<div class="a" style="left:494px;top:85px;width:30px;height:495px;background:#404040;border-radius:3px 3px 0 0;"></div>
<div class="a" style="left:503px;top:89px;width:2px;height:2px;background:#7a7a7a;"></div>
<div class="a" style="left:508px;top:89px;width:2px;height:2px;background:#7a7a7a;"></div>
<div class="a" style="left:513px;top:89px;width:2px;height:2px;background:#7a7a7a;"></div>
<div class="a" style="left:495px;top:96px;width:28px;height:28px;background:#141414;border-radius:4px;"></div>
<svg class="a" style="left:0;top:0" width="0" height="0"><defs><linearGradient id="gsq" x1="0" y1="0" x2="0" y2="1"><stop offset="0" stop-color="#ffffff"/><stop offset="1" stop-color="#c4c4c4"/></linearGradient></defs></svg>
<svg class="a" style="left:494px;top:85px;" width="30" height="40" viewBox="0 0 30 40"><path d="M10.500 15L10.500 31.500L13.800 28.500L16 33.500L19.300 32.300L17.500 27.300L22.300 26.500z" fill="none" stroke="#2ecc71" stroke-width="1.300" stroke-linejoin="miter"/></svg>
<svg class="a" style="left:494px;top:125px;" width="30" height="30" viewBox="0 0 30 30"><path d="M10 5V25L16 18.500H24.400z" fill="url(#gsq)"/></svg>
<svg class="a" style="left:498.0px;top:159.0px;" width="22" height="22" viewBox="0 0 22 22"><g transform="rotate(128 11 11)"><path d="M11 22.500L6.300 12.500L8.300 6h5.400l2 6.500z" fill="url(#gsq)"/><path d="M11 22V13.500" stroke="#444" stroke-width="1"/><circle cx="11" cy="12.500" r="1.300" fill="#444"/><rect x="8" y="3.300" width="6" height="1.200" fill="#dcdcdc"/><rect x="8" y="0.500" width="6" height="2" fill="#dcdcdc"/></g></svg>
<svg class="a" style="left:498.0px;top:189.0px;" width="22" height="22" viewBox="0 0 22 22"><g transform="rotate(45 11 11)"><path d="M9 3.500Q9 0.500 11 0.500Q13 0.500 13 3.500z" fill="#ffffff"/><rect x="9" y="4.500" width="4" height="14" fill="#dcdcdc"/><path d="M9.300 19.300h3.400l-1.700 3.200z" fill="#dcdcdc"/></g></svg>
<svg class="a" style="left:494px;top:215px;" width="30" height="30" viewBox="0 0 30 30"><path d="M4.600 9.500h13.600v9l-2.700 2.700H4.600z" fill="url(#gsq)"/><path d="M19.100 13.200L25.200 9.700V20.300L19.100 18.500z" fill="url(#gsq)"/><rect x="6.800" y="7.600" width="8.500" height="1.300" fill="#f0f0f0"/><circle cx="8" cy="13" r="1.300" fill="#333"/></svg>
<svg class="a" style="left:494px;top:245px;" width="30" height="30" viewBox="0 0 30 30"><path d="M7 22.800L23 7" stroke="#e4e4e4" stroke-width="1.300"/></svg>
<svg class="a" style="left:494px;top:275px;" width="30" height="30" viewBox="0 0 30 30"><path d="M7.800 6.900h14.500v3.200h-5.200v12.800h-4.100V10.100H7.800z" fill="url(#gsq)"/></svg>
<svg class="a" style="left:494px;top:305px;" width="30" height="30" viewBox="0 0 30 30"><path d="M7 6.500V18L10 14.300L14.800 13.300z" fill="#dcdcdc"/><path d="M12.500 8L17 7M20.300 10L23 20M10 22.800H20" stroke="#dcdcdc" stroke-width="1.200" fill="none"/><rect x="19" y="5.500" width="2.500" height="2.500" fill="#f4f4f4"/><rect x="6" y="21.800" width="2.500" height="2.500" fill="#f4f4f4"/><rect x="22" y="21.800" width="2.500" height="2.500" fill="#f4f4f4"/><rect x="6.800" y="19.300" width="1.200" height="1.200" fill="#f4f4f4"/></svg>
<svg class="a" style="left:502px;top:343px" width="14" height="14"><rect width="14" height="14" fill="url(#gsq)"/></svg>
<svg class="a" style="left:501px;top:372px" width="16" height="16"><circle cx="8" cy="8" r="8" fill="url(#gsq)"/></svg>
<svg class="a" style="left:500px;top:401px" width="18" height="17"><path d="M9 0.500L17.500 6.700L14.300 16.500H3.700L0.500 6.700z" fill="url(#gsq)"/></svg>
<svg class="a" style="left:499.500px;top:430px" width="19" height="18"><path d="M9.500 0.500L11.800 6.800L18.500 7L13.200 11.100L15.100 17.500L9.500 13.800L3.900 17.500L5.800 11.100L0.500 7L7.200 6.800z" fill="url(#gsq)"/></svg>
<svg class="a" style="left:498.0px;top:459.0px;" width="22" height="22" viewBox="0 0 22 22"><path d="M17.700 10.500A6.700 6.700 0 1 0 11.300 17.700" fill="none" stroke="#e6e6e6" stroke-width="3"/></svg>
<svg class="a" style="left:499.500px;top:490px" width="19" height="19"><path d="M9.500 0.500Q10.500 8.500 18.500 9.500Q10.500 10.500 9.500 18.500Q8.500 10.500 0.500 9.500Q8.500 8.500 9.500 0.500z" fill="url(#gsq)"/></svg>
<svg class="a" style="left:500px;top:521px;" width="18" height="18" viewBox="0 0 18 18"><path d="M17.82,7.21L17.82,10.79L15.28,10.69L14.63,12.25L16.50,13.97L13.97,16.50L12.24,14.63L10.69,15.28L10.79,17.82L7.21,17.82L7.31,15.28L5.75,14.63L4.03,16.50L1.50,13.97L3.37,12.24L2.72,10.69L0.18,10.79L0.18,7.21L2.72,7.31L3.37,5.75L1.50,4.03L4.03,1.50L5.76,3.37L7.31,2.72L7.21,0.18L10.79,0.18L10.69,2.72L12.25,3.37L13.97,1.50L16.50,4.03L14.63,5.76L15.28,7.31z" fill="#dcdcdc"/><circle cx="9" cy="9" r="2.800" fill="#444"/></svg>
<svg class="a" style="left:502px;top:565px;" width="14" height="12" viewBox="0 0 14 12"><path d="M1 1L6 6L1 11M7.500 1L12.500 6L7.500 11" fill="none" stroke="#c8c8c8" stroke-width="1.200"/></svg>
<div class="a" style="left:530px;top:85px;width:1057px;height:22px;background:#1c1c1c;"></div>
<div class="a" style="left:530px;top:85px;width:87px;height:22px;background:#3a3a3a;border-radius:4px 4px 0 0;"></div>
<div class="a t" style="left:535px;top:86px;height:22px;line-height:22px;color:#f0f0f0;letter-spacing:-0.06px;">Composition 1</div>
<div class="a" style="left:530px;top:107px;width:1057px;height:473px;background:#444444;"></div>
<div class="a" style="left:550px;top:127px;width:1037px;height:431px;background:#000000;"></div>
<div class="a" style="left:703.6px;top:137px;width:729px;height:410px;background:#0a0a0a;"></div>
<div class="a t" style="left:535px;top:110px;height:14px;line-height:14px;color:#c0c0c0;font-size:11px;">px</div>
<svg class="a" style="left:531px;top:107px;" width="1056" height="20" viewBox="0 0 1056 20"><rect x="24.0" y="12" width="1" height="8" fill="#9a9a9a"/><rect x="35.4" y="16" width="1" height="4" fill="#8a8a8a"/><rect x="46.8" y="16" width="1" height="4" fill="#8a8a8a"/><rect x="58.2" y="16" width="1" height="4" fill="#8a8a8a"/><rect x="69.6" y="16" width="1" height="4" fill="#8a8a8a"/><rect x="81.0" y="12" width="1" height="8" fill="#9a9a9a"/><rect x="92.4" y="16" width="1" height="4" fill="#8a8a8a"/><rect x="103.8" y="16" width="1" height="4" fill="#8a8a8a"/><rect x="115.2" y="16" width="1" height="4" fill="#8a8a8a"/><rect x="126.6" y="16" width="1" height="4" fill="#8a8a8a"/><rect x="138.0" y="12" width="1" height="8" fill="#9a9a9a"/><rect x="149.4" y="16" width="1" height="4" fill="#8a8a8a"/><rect x="160.8" y="16" width="1" height="4" fill="#8a8a8a"/><rect x="172.2" y="16" width="1" height="4" fill="#8a8a8a"/><rect x="183.6" y="16" width="1" height="4" fill="#8a8a8a"/><rect x="195.0" y="12" width="1" height="8" fill="#9a9a9a"/><rect x="206.4" y="16" width="1" height="4" fill="#8a8a8a"/><rect x="217.8" y="16" width="1" height="4" fill="#8a8a8a"/><rect x="229.2" y="16" width="1" height="4" fill="#8a8a8a"/><rect x="240.6" y="16" width="1" height="4" fill="#8a8a8a"/><rect x="252.0" y="12" width="1" height="8" fill="#9a9a9a"/><rect x="263.4" y="16" width="1" height="4" fill="#8a8a8a"/><rect x="274.8" y="16" width="1" height="4" fill="#8a8a8a"/><rect x="286.2" y="16" width="1" height="4" fill="#8a8a8a"/><rect x="297.6" y="16" width="1" height="4" fill="#8a8a8a"/><rect x="309.0" y="12" width="1" height="8" fill="#9a9a9a"/><rect x="320.4" y="16" width="1" height="4" fill="#8a8a8a"/><rect x="331.8" y="16" width="1" height="4" fill="#8a8a8a"/><rect x="343.2" y="16" width="1" height="4" fill="#8a8a8a"/><rect x="354.6" y="16" width="1" height="4" fill="#8a8a8a"/><rect x="366.0" y="12" width="1" height="8" fill="#9a9a9a"/><rect x="377.4" y="16" width="1" height="4" fill="#8a8a8a"/><rect x="388.8" y="16" width="1" height="4" fill="#8a8a8a"/><rect x="400.2" y="16" width="1" height="4" fill="#8a8a8a"/><rect x="411.6" y="16" width="1" height="4" fill="#8a8a8a"/><rect x="423.0" y="12" width="1" height="8" fill="#9a9a9a"/><rect x="434.4" y="16" width="1" height="4" fill="#8a8a8a"/><rect x="445.8" y="16" width="1" height="4" fill="#8a8a8a"/><rect x="457.2" y="16" width="1" height="4" fill="#8a8a8a"/><rect x="468.6" y="16" width="1" height="4" fill="#8a8a8a"/><rect x="480.0" y="12" width="1" height="8" fill="#9a9a9a"/><rect x="491.4" y="16" width="1" height="4" fill="#8a8a8a"/><rect x="502.8" y="16" width="1" height="4" fill="#8a8a8a"/><rect x="514.2" y="16" width="1" height="4" fill="#8a8a8a"/><rect x="525.6" y="16" width="1" height="4" fill="#8a8a8a"/><rect x="537.0" y="12" width="1" height="8" fill="#9a9a9a"/><rect x="548.4" y="16" width="1" height="4" fill="#8a8a8a"/><rect x="559.8" y="16" width="1" height="4" fill="#8a8a8a"/><rect x="571.2" y="16" width="1" height="4" fill="#8a8a8a"/><rect x="582.6" y="16" width="1" height="4" fill="#8a8a8a"/><rect x="594.0" y="12" width="1" height="8" fill="#9a9a9a"/><rect x="605.4" y="16" width="1" height="4" fill="#8a8a8a"/><rect x="616.8" y="16" width="1" height="4" fill="#8a8a8a"/><rect x="628.2" y="16" width="1" height="4" fill="#8a8a8a"/><rect x="639.6" y="16" width="1" height="4" fill="#8a8a8a"/><rect x="651.0" y="12" width="1" height="8" fill="#9a9a9a"/><rect x="662.4" y="16" width="1" height="4" fill="#8a8a8a"/><rect x="673.8" y="16" width="1" height="4" fill="#8a8a8a"/><rect x="685.2" y="16" width="1" height="4" fill="#8a8a8a"/><rect x="696.6" y="16" width="1" height="4" fill="#8a8a8a"/><rect x="708.0" y="12" width="1" height="8" fill="#9a9a9a"/><rect x="719.4" y="16" width="1" height="4" fill="#8a8a8a"/><rect x="730.8" y="16" width="1" height="4" fill="#8a8a8a"/><rect x="742.2" y="16" width="1" height="4" fill="#8a8a8a"/><rect x="753.6" y="16" width="1" height="4" fill="#8a8a8a"/><rect x="765.0" y="12" width="1" height="8" fill="#9a9a9a"/><rect x="776.4" y="16" width="1" height="4" fill="#8a8a8a"/><rect x="787.8" y="16" width="1" height="4" fill="#8a8a8a"/><rect x="799.2" y="16" width="1" height="4" fill="#8a8a8a"/><rect x="810.6" y="16" width="1" height="4" fill="#8a8a8a"/><rect x="822.0" y="12" width="1" height="8" fill="#9a9a9a"/><rect x="833.4" y="16" width="1" height="4" fill="#8a8a8a"/><rect x="844.8" y="16" width="1" height="4" fill="#8a8a8a"/><rect x="856.2" y="16" width="1" height="4" fill="#8a8a8a"/><rect x="867.6" y="16" width="1" height="4" fill="#8a8a8a"/><rect x="879.0" y="12" width="1" height="8" fill="#9a9a9a"/><rect x="890.4" y="16" width="1" height="4" fill="#8a8a8a"/><rect x="901.8" y="16" width="1" height="4" fill="#8a8a8a"/><rect x="913.2" y="16" width="1" height="4" fill="#8a8a8a"/><rect x="924.6" y="16" width="1" height="4" fill="#8a8a8a"/><rect x="936.0" y="12" width="1" height="8" fill="#9a9a9a"/><rect x="947.4" y="16" width="1" height="4" fill="#8a8a8a"/><rect x="958.8" y="16" width="1" height="4" fill="#8a8a8a"/><rect x="970.2" y="16" width="1" height="4" fill="#8a8a8a"/><rect x="981.6" y="16" width="1" height="4" fill="#8a8a8a"/><rect x="993.0" y="12" width="1" height="8" fill="#9a9a9a"/><rect x="1004.4" y="16" width="1" height="4" fill="#8a8a8a"/><rect x="1015.8" y="16" width="1" height="4" fill="#8a8a8a"/><rect x="1027.2" y="16" width="1" height="4" fill="#8a8a8a"/><rect x="1038.6" y="16" width="1" height="4" fill="#8a8a8a"/><rect x="1050.0" y="12" width="1" height="8" fill="#9a9a9a"/></svg>
<div class="a" style="left:550px;top:107px;width:1037px;height:14px;overflow:hidden;">
<div class="a t" style="left:42.5px;top:1px;width:40px;text-align:center;font-size:10px;line-height:13px;color:#c8c8c8;">-1200</div>
<div class="a t" style="left:99.5px;top:1px;width:40px;text-align:center;font-size:10px;line-height:13px;color:#c8c8c8;">-1050</div>
<div class="a t" style="left:156.5px;top:1px;width:40px;text-align:center;font-size:10px;line-height:13px;color:#c8c8c8;">-900</div>
<div class="a t" style="left:213.5px;top:1px;width:40px;text-align:center;font-size:10px;line-height:13px;color:#c8c8c8;">-750</div>
<div class="a t" style="left:270.5px;top:1px;width:40px;text-align:center;font-size:10px;line-height:13px;color:#c8c8c8;">-600</div>
<div class="a t" style="left:327.5px;top:1px;width:40px;text-align:center;font-size:10px;line-height:13px;color:#c8c8c8;">-450</div>
<div class="a t" style="left:384.5px;top:1px;width:40px;text-align:center;font-size:10px;line-height:13px;color:#c8c8c8;">-300</div>
<div class="a t" style="left:441.5px;top:1px;width:40px;text-align:center;font-size:10px;line-height:13px;color:#c8c8c8;">-150</div>
<div class="a t" style="left:498.5px;top:1px;width:40px;text-align:center;font-size:10px;line-height:13px;color:#c8c8c8;">0</div>
<div class="a t" style="left:555.5px;top:1px;width:40px;text-align:center;font-size:10px;line-height:13px;color:#c8c8c8;">150</div>
<div class="a t" style="left:612.5px;top:1px;width:40px;text-align:center;font-size:10px;line-height:13px;color:#c8c8c8;">300</div>
<div class="a t" style="left:669.5px;top:1px;width:40px;text-align:center;font-size:10px;line-height:13px;color:#c8c8c8;">450</div>
<div class="a t" style="left:726.5px;top:1px;width:40px;text-align:center;font-size:10px;line-height:13px;color:#c8c8c8;">600</div>
<div class="a t" style="left:783.5px;top:1px;width:40px;text-align:center;font-size:10px;line-height:13px;color:#c8c8c8;">750</div>
<div class="a t" style="left:840.5px;top:1px;width:40px;text-align:center;font-size:10px;line-height:13px;color:#c8c8c8;">900</div>
<div class="a t" style="left:897.5px;top:1px;width:40px;text-align:center;font-size:10px;line-height:13px;color:#c8c8c8;">1050</div>
<div class="a t" style="left:954.5px;top:1px;width:40px;text-align:center;font-size:10px;line-height:13px;color:#c8c8c8;">1200</div>
<div class="a t" style="left:1011.5px;top:1px;width:40px;text-align:center;font-size:10px;line-height:13px;color:#c8c8c8;">1350</div>
</div>
<svg class="a" style="left:531px;top:127px;" width="19" height="431" viewBox="0 0 19 431"><rect x="15" y="420.2" width="4" height="1" fill="#8a8a8a"/><rect x="15" y="408.8" width="4" height="1" fill="#8a8a8a"/><rect x="15" y="397.4" width="4" height="1" fill="#8a8a8a"/><rect x="11" y="386.0" width="8" height="1" fill="#9a9a9a"/><rect x="15" y="374.6" width="4" height="1" fill="#8a8a8a"/><rect x="15" y="363.2" width="4" height="1" fill="#8a8a8a"/><rect x="15" y="351.8" width="4" height="1" fill="#8a8a8a"/><rect x="15" y="340.4" width="4" height="1" fill="#8a8a8a"/><rect x="11" y="329.0" width="8" height="1" fill="#9a9a9a"/><rect x="15" y="317.6" width="4" height="1" fill="#8a8a8a"/><rect x="15" y="306.2" width="4" height="1" fill="#8a8a8a"/><rect x="15" y="294.8" width="4" height="1" fill="#8a8a8a"/><rect x="15" y="283.4" width="4" height="1" fill="#8a8a8a"/><rect x="11" y="272.0" width="8" height="1" fill="#9a9a9a"/><rect x="15" y="260.6" width="4" height="1" fill="#8a8a8a"/><rect x="15" y="249.2" width="4" height="1" fill="#8a8a8a"/><rect x="15" y="237.8" width="4" height="1" fill="#8a8a8a"/><rect x="15" y="226.4" width="4" height="1" fill="#8a8a8a"/><rect x="11" y="215.0" width="8" height="1" fill="#9a9a9a"/><rect x="15" y="203.6" width="4" height="1" fill="#8a8a8a"/><rect x="15" y="192.2" width="4" height="1" fill="#8a8a8a"/><rect x="15" y="180.8" width="4" height="1" fill="#8a8a8a"/><rect x="15" y="169.4" width="4" height="1" fill="#8a8a8a"/><rect x="11" y="158.0" width="8" height="1" fill="#9a9a9a"/><rect x="15" y="146.6" width="4" height="1" fill="#8a8a8a"/><rect x="15" y="135.2" width="4" height="1" fill="#8a8a8a"/><rect x="15" y="123.8" width="4" height="1" fill="#8a8a8a"/><rect x="15" y="112.4" width="4" height="1" fill="#8a8a8a"/><rect x="11" y="101.0" width="8" height="1" fill="#9a9a9a"/><rect x="15" y="89.6" width="4" height="1" fill="#8a8a8a"/><rect x="15" y="78.2" width="4" height="1" fill="#8a8a8a"/><rect x="15" y="66.8" width="4" height="1" fill="#8a8a8a"/><rect x="15" y="55.4" width="4" height="1" fill="#8a8a8a"/><rect x="11" y="44.0" width="8" height="1" fill="#9a9a9a"/><rect x="15" y="32.6" width="4" height="1" fill="#8a8a8a"/><rect x="15" y="21.2" width="4" height="1" fill="#8a8a8a"/><rect x="15" y="9.8" width="4" height="1" fill="#8a8a8a"/></svg>
<div class="a t" style="left:517.5px;top:507.0px;width:40px;height:13px;text-align:center;font-size:10px;line-height:13px;color:#b8b8b8;will-change:transform;transform:rotate(-90deg);">-450</div>
<div class="a t" style="left:517.5px;top:450.0px;width:40px;height:13px;text-align:center;font-size:10px;line-height:13px;color:#b8b8b8;will-change:transform;transform:rotate(-90deg);">-300</div>
<div class="a t" style="left:517.5px;top:393.0px;width:40px;height:13px;text-align:center;font-size:10px;line-height:13px;color:#b8b8b8;will-change:transform;transform:rotate(-90deg);">-150</div>
<div class="a t" style="left:517.5px;top:336.0px;width:40px;height:13px;text-align:center;font-size:10px;line-height:13px;color:#b8b8b8;will-change:transform;transform:rotate(-90deg);">0</div>
<div class="a t" style="left:517.5px;top:279.0px;width:40px;height:13px;text-align:center;font-size:10px;line-height:13px;color:#b8b8b8;will-change:transform;transform:rotate(-90deg);">150</div>
<div class="a t" style="left:517.5px;top:222.0px;width:40px;height:13px;text-align:center;font-size:10px;line-height:13px;color:#b8b8b8;will-change:transform;transform:rotate(-90deg);">300</div>
<div class="a t" style="left:517.5px;top:165.0px;width:40px;height:13px;text-align:center;font-size:10px;line-height:13px;color:#b8b8b8;will-change:transform;transform:rotate(-90deg);">450</div>
<div class="a" style="left:935px;top:209px;width:266px;height:266px;background:#666666;"></div>
<div class="a" style="left:935px;top:298px;width:266px;height:88px;background:#00ffc8;border:1px solid #2ecc71;box-sizing:border-box;"></div>
<div class="a" style="left:931.5px;top:294.8px;width:7px;height:7px;background:#ffffff;border:1px solid #2ecc71;box-sizing:border-box;"></div>
<div class="a" style="left:1197.5px;top:294.8px;width:7px;height:7px;background:#ffffff;border:1px solid #2ecc71;box-sizing:border-box;"></div>
<div class="a" style="left:931.5px;top:382.3px;width:7px;height:7px;background:#ffffff;border:1px solid #2ecc71;box-sizing:border-box;"></div>
<div class="a" style="left:1197.5px;top:382.3px;width:7px;height:7px;background:#ffffff;border:1px solid #2ecc71;box-sizing:border-box;"></div>
<svg class="a" style="left:1063px;top:337px;" width="10" height="10" viewBox="0 0 10 10"><circle cx="5" cy="5" r="3.800" fill="none" stroke="#1a4a40" stroke-width="1"/><circle cx="5" cy="5" r="1" fill="#1a4a40"/></svg>
<div class="a" style="left:935px;top:282px;width:9.2px;height:9px;background:#ffeb7a;"></div>
<div class="a t" style="left:947px;top:280px;height:16px;line-height:16px;color:#ffffff;letter-spacing:-0.00px;will-change:transform;">CenterRectangle</div>
<div class="a t" style="left:569px;top:461px;height:14px;line-height:14px;color:#ececec;font-weight:bold;letter-spacing:-0.80px;will-change:transform;">Hold S</div>
<div class="a t" style="left:605px;top:461px;height:14px;line-height:14px;color:#4c4c4c;letter-spacing:-0.07px;will-change:transform;">Direct Layer Selection</div>
<div class="a t" style="left:569px;top:475px;height:14px;line-height:14px;color:#ececec;font-weight:bold;letter-spacing:-1.00px;will-change:transform;">Space</div>
<div class="a t" style="left:603px;top:475px;height:14px;line-height:14px;color:#4c4c4c;letter-spacing:-0.19px;will-change:transform;">Play/ Stop</div>
<div class="a t" style="left:569px;top:489px;height:14px;line-height:14px;color:#ececec;font-weight:bold;letter-spacing:-0.71px;will-change:transform;">Space + click + drag</div>
<div class="a t" style="left:674px;top:489px;height:14px;line-height:14px;color:#4c4c4c;letter-spacing:-0.68px;will-change:transform;">Pan</div>
<div class="a t" style="left:569px;top:503px;height:14px;line-height:14px;color:#ececec;font-weight:bold;letter-spacing:-0.53px;will-change:transform;">Alt + click + drag</div>
<div class="a t" style="left:658px;top:503px;height:14px;line-height:14px;color:#4c4c4c;letter-spacing:0.06px;will-change:transform;">Move Pivot Point</div>
<div class="a t" style="left:569px;top:517px;height:14px;line-height:14px;color:#ececec;font-weight:bold;letter-spacing:-0.42px;will-change:transform;">Shift</div>
<div class="a t" style="left:597px;top:517px;height:14px;line-height:14px;color:#4c4c4c;letter-spacing:-0.39px;will-change:transform;">Enable Snapping</div>
<div class="a t" style="left:569px;top:536px;height:16px;line-height:16px;color:#f4f4f4;letter-spacing:0.16px;will-change:transform;">00:00:04:00</div>
<div class="a t" style="left:998px;top:536px;height:16px;line-height:16px;color:#f4f4f4;letter-spacing:0.12px;will-change:transform;">Viewport Quality: High</div>
<div class="a" style="left:535px;top:561px;width:78px;height:16px;background:#2b2b2b;border-radius:3px;"></div>
<div class="a t" style="left:538px;top:562px;height:16px;line-height:16px;color:#e0e0e0;letter-spacing:-0.51px;">38%</div>
<svg class="a" style="left:600px;top:566.5px;" width="10" height="6" viewBox="0 0 10 6"><path d="M0.500 0.500L5 5L9.500 0.500" fill="none" stroke="#d0d0d0" stroke-width="1.100"/></svg>
<div class="a" style="left:866px;top:560px;width:20px;height:18px;background:#2b2b2b;border-radius:3px;border:1px solid #252525;box-sizing:border-box;box-shadow:inset 0 1px 0 rgba(255,255,255,0.13);"></div>
<svg class="a" style="left:866px;top:560px;" width="20" height="18" viewBox="0 0 20 18"><rect x="4" y="4" width="1.800" height="10" fill="#e4e4e4"/><path d="M15.500 4V14L7 9z" fill="#e4e4e4"/></svg>
<div class="a" style="left:886px;top:560px;width:20px;height:18px;background:#2b2b2b;border-radius:3px;border:1px solid #252525;box-sizing:border-box;box-shadow:inset 0 1px 0 rgba(255,255,255,0.13);"></div>
<svg class="a" style="left:886px;top:560px;" width="20" height="18" viewBox="0 0 20 18"><rect x="13.500" y="4" width="1.800" height="10" fill="#e4e4e4"/><path d="M12 4V14L4 9z" fill="#e4e4e4"/></svg>
<div class="a" style="left:906px;top:560px;width:19px;height:18px;background:#2b2b2b;border-radius:3px;border:1px solid #252525;box-sizing:border-box;box-shadow:inset 0 1px 0 rgba(255,255,255,0.13);"></div>
<svg class="a" style="left:906px;top:560px;" width="19" height="18" viewBox="0 0 19 18"><path d="M5 4V14L14.500 9z" fill="#e4e4e4"/></svg>
<div class="a" style="left:925px;top:560px;width:21px;height:18px;background:#2b2b2b;border-radius:3px;border:1px solid #252525;box-sizing:border-box;box-shadow:inset 0 1px 0 rgba(255,255,255,0.13);"></div>
<svg class="a" style="left:925px;top:560px;" width="21" height="18" viewBox="0 0 21 18"><rect x="4.500" y="4" width="1.800" height="10" fill="#e4e4e4"/><path d="M8 4V14L16.500 9z" fill="#e4e4e4"/></svg>
<div class="a" style="left:946px;top:560px;width:20px;height:18px;background:#2b2b2b;border-radius:3px;border:1px solid #252525;box-sizing:border-box;box-shadow:inset 0 1px 0 rgba(255,255,255,0.13);"></div>
<svg class="a" style="left:946px;top:560px;" width="20" height="18" viewBox="0 0 20 18"><rect x="14" y="4" width="1.800" height="10" fill="#e4e4e4"/><path d="M4.500 4V14L13 9z" fill="#e4e4e4"/></svg>
<div class="a" style="left:971px;top:560px;width:20px;height:18px;background:#2b2b2b;border-radius:3px;border:1px solid #252525;box-sizing:border-box;box-shadow:inset 0 1px 0 rgba(255,255,255,0.13);"></div>
<svg class="a" style="left:971px;top:560px;" width="20" height="18" viewBox="0 0 20 18"><path d="M10.500 6.500H5.500Q4.500 6.500 4.500 7.500V12.500Q4.500 13.500 5.500 13.500H14.500Q15.500 13.500 15.500 12.500V9.500" fill="none" stroke="#e4e4e4" stroke-width="1.300"/><path d="M10.500 3.500L14.500 6.500L10.500 9.500z" fill="#e4e4e4"/></svg>
<div class="a" style="left:1231px;top:560px;width:39px;height:18px;background:#2b2b2b;border-radius:3px;"></div>
<svg class="a" style="left:1234px;top:564px;" width="14" height="10" viewBox="0 0 14 10"><path d="M0.300 5L4 0.800h9.700v8.400H4z" fill="#e0e0e0"/><circle cx="4.800" cy="5" r="1.800" fill="#2b2b2b"/></svg>
<div class="a t" style="left:1258px;top:561px;height:18px;line-height:18px;color:#b0b0b0;">0</div>
<div class="a" style="left:1272px;top:560px;width:31px;height:18px;background:#2b2b2b;border-radius:3px;border:1px solid #252525;box-sizing:border-box;box-shadow:inset 0 1px 0 rgba(255,255,255,0.10);"></div>
<div class="a" style="left:1291px;top:561px;width:1px;height:16px;background:#3a3a3a;"></div>
<svg class="a" style="left:1272px;top:560px;" width="31" height="18" viewBox="0 0 31 18"><path d="M4 7.500h2.500l3.500-3v9l-3.500-3H4z" fill="#2ecc71"/><path d="M11.500 6.500Q13 9 11.500 11.500M13.500 4.500Q16.500 9 13.500 13.500" fill="none" stroke="#2ecc71" stroke-width="1.200"/><path d="M22 5.500l5 3.500-5 3.500z" fill="none" stroke="#8a8a8a" stroke-width="1"/></svg>
<div class="a" style="left:1307px;top:560px;width:31px;height:18px;background:#2b2b2b;border-radius:3px;border:1px solid #252525;box-sizing:border-box;box-shadow:inset 0 1px 0 rgba(255,255,255,0.10);"></div>
<div class="a" style="left:1308px;top:561px;width:18px;height:16px;background:#3e3e3e;border-radius:2px 0 0 2px;"></div>
<div class="a" style="left:1326px;top:561px;width:1px;height:16px;background:#3a3a3a;"></div>
<svg class="a" style="left:1307px;top:560px;" width="31" height="18" viewBox="0 0 31 18"><g transform="translate(1.600 1.300) scale(0.820) rotate(40 9.500 9.500)"><path d="M5.500 15V9A4 4 0 0 1 13.500 9V15" fill="none" stroke="#e4e4e4" stroke-width="2.300"/><path d="M4.350 13.500h2.300M12.350 13.500h2.300" stroke="#6a6a6a" stroke-width="0.800"/></g><path d="M22 5.500l5 3.500-5 3.500z" fill="none" stroke="#8a8a8a" stroke-width="1"/></svg>
<div class="a" style="left:1342px;top:560px;width:31px;height:18px;background:#2b2b2b;border-radius:3px;border:1px solid #252525;box-sizing:border-box;box-shadow:inset 0 1px 0 rgba(255,255,255,0.10);"></div>
<div class="a" style="left:1343px;top:561px;width:18px;height:16px;background:#3e3e3e;border-radius:2px 0 0 2px;"></div>
<div class="a" style="left:1361px;top:561px;width:1px;height:16px;background:#3a3a3a;"></div>
<svg class="a" style="left:1342px;top:560px;" width="31" height="18" viewBox="0 0 31 18"><path d="M7 3.500v11M12 3.500v11M4 6.500h11M4 11.500h11" stroke="#e4e4e4" stroke-width="1.200"/><path d="M22 5.500l5 3.500-5 3.500z" fill="none" stroke="#8a8a8a" stroke-width="1"/></svg>
<div class="a" style="left:1377px;top:560px;width:20px;height:18px;background:#2b2b2b;border-radius:3px;border:1px solid #252525;box-sizing:border-box;box-shadow:inset 0 1px 0 rgba(255,255,255,0.10);"></div>
<svg class="a" style="left:1377px;top:560px;" width="20" height="18" viewBox="0 0 20 18"><rect x="3.500" y="4" width="3.500" height="4" fill="#2ecc71"/><rect x="9" y="4.500" width="8" height="3.500" fill="none" stroke="#2ecc71" stroke-width="1.200"/><rect x="3.500" y="10" width="3.500" height="4.500" fill="#2ecc71"/><rect x="8.500" y="10" width="9" height="4.500" fill="#2ecc71"/></svg>
<div class="a" style="left:1400px;top:560px;width:20px;height:18px;background:#2b2b2b;border-radius:3px;border:1px solid #252525;box-sizing:border-box;box-shadow:inset 0 1px 0 rgba(255,255,255,0.10);"></div>
<div class="a" style="left:1401px;top:561px;width:18px;height:16px;background:#3e3e3e;border-radius:2px 0 0 2px;"></div>
<svg class="a" style="left:1400px;top:560px;" width="20" height="18" viewBox="0 0 20 18"><path d="M3.500 4.500L7.500 9L3.500 13.500z" fill="#e4e4e4"/><path d="M8 4.500L12 9L8 13.500M12.500 4.500L16.500 9L12.500 13.500" fill="none" stroke="#e4e4e4" stroke-width="1.500"/></svg>
<div class="a" style="left:1423px;top:560px;width:31px;height:18px;background:#2b2b2b;border-radius:3px;border:1px solid #252525;box-sizing:border-box;box-shadow:inset 0 1px 0 rgba(255,255,255,0.10);"></div>
<div class="a" style="left:1424px;top:561px;width:18px;height:16px;background:#3e3e3e;border-radius:2px 0 0 2px;"></div>
<div class="a" style="left:1442px;top:561px;width:1px;height:16px;background:#3a3a3a;"></div>
<svg class="a" style="left:1423px;top:560px;" width="31" height="18" viewBox="0 0 31 18"><rect x="4" y="4" width="12" height="8" fill="none" stroke="#e4e4e4" stroke-width="1.200"/><rect x="3.400" y="12" width="13.200" height="2.200" fill="#e4e4e4"/><path d="M22 5.500l5 3.500-5 3.500z" fill="none" stroke="#8a8a8a" stroke-width="1"/></svg>
<div class="a" style="left:1458px;top:560px;width:31px;height:18px;background:#2b2b2b;border-radius:3px;border:1px solid #252525;box-sizing:border-box;box-shadow:inset 0 1px 0 rgba(255,255,255,0.10);"></div>
<div class="a" style="left:1459px;top:561px;width:18px;height:16px;background:#3e3e3e;border-radius:2px 0 0 2px;"></div>
<div class="a" style="left:1477px;top:561px;width:1px;height:16px;background:#3a3a3a;"></div>
<svg class="a" style="left:1458px;top:560px;" width="31" height="18" viewBox="0 0 31 18"><path d="M3.500 4h7.500v4.500h-7.500z" fill="none" stroke="#d0d0d0" stroke-width="1.100"/><path d="M6 10.500h7.500V6.500M8.500 12.500h7.500V8.500M11 14.500h7.500V10.500" fill="none" stroke="#a0a0a0" stroke-width="1"/><path d="M22 5.500l5 3.500-5 3.500z" fill="none" stroke="#8a8a8a" stroke-width="1"/></svg>
<div class="a" style="left:1493px;top:560px;width:31px;height:18px;background:#2b2b2b;border-radius:3px;border:1px solid #252525;box-sizing:border-box;box-shadow:inset 0 1px 0 rgba(255,255,255,0.10);"></div>
<div class="a" style="left:1494px;top:561px;width:18px;height:16px;background:#3e3e3e;border-radius:2px 0 0 2px;"></div>
<div class="a" style="left:1512px;top:561px;width:1px;height:16px;background:#3a3a3a;"></div>
<svg class="a" style="left:1493px;top:560px;" width="31" height="18" viewBox="0 0 31 18"><rect x="3.500" y="3.500" width="8" height="8" fill="#e4e4e4"/><rect x="8.500" y="7.500" width="7.500" height="7.500" fill="#3e3e3e" stroke="#e4e4e4" stroke-width="1.200"/><path d="M22 5.500l5 3.500-5 3.500z" fill="none" stroke="#8a8a8a" stroke-width="1"/></svg>
<div class="a" style="left:1528px;top:560px;width:31px;height:18px;background:#2b2b2b;border-radius:3px;border:1px solid #252525;box-sizing:border-box;box-shadow:inset 0 1px 0 rgba(255,255,255,0.10);"></div>
<div class="a" style="left:1547px;top:561px;width:1px;height:16px;background:#3a3a3a;"></div>
<svg class="a" style="left:1528px;top:560px;" width="31" height="18" viewBox="0 0 31 18"><rect x="4" y="3.5" width="3" height="3" fill="#2ecc71"/><rect x="4" y="9.5" width="3" height="3" fill="#2ecc71"/><rect x="7" y="6.5" width="3" height="3" fill="#2ecc71"/><rect x="7" y="12.5" width="3" height="3" fill="#2ecc71"/><rect x="10" y="3.5" width="3" height="3" fill="#2ecc71"/><rect x="10" y="9.5" width="3" height="3" fill="#2ecc71"/><rect x="13" y="6.5" width="3" height="3" fill="#2ecc71"/><rect x="13" y="12.5" width="3" height="3" fill="#2ecc71"/><path d="M22 5.500l5 3.500-5 3.500z" fill="none" stroke="#8a8a8a" stroke-width="1"/></svg>
<svg class="a" style="left:1566.3px;top:562.5px;z-index:2;" width="13" height="13" viewBox="0 0 18 18"><path d="M17.82,7.21L17.82,10.79L15.28,10.69L14.63,12.25L16.50,13.97L13.97,16.50L12.24,14.63L10.69,15.28L10.79,17.82L7.21,17.82L7.31,15.28L5.75,14.63L4.03,16.50L1.50,13.97L3.37,12.24L2.72,10.69L0.18,10.79L0.18,7.21L2.72,7.31L3.37,5.75L1.50,4.03L4.03,1.50L5.76,3.37L7.31,2.72L7.21,0.18L10.79,0.18L10.69,2.72L12.25,3.37L13.97,1.50L16.50,4.03L14.63,5.76L15.28,7.31z" fill="#e4e4e4"/><circle cx="9" cy="9" r="2.800" fill="#2b2b2b"/></svg>
<div class="a" style="left:1563px;top:560px;width:20px;height:18px;background:#2b2b2b;border-radius:3px;border:1px solid #252525;box-sizing:border-box;box-shadow:inset 0 1px 0 rgba(255,255,255,0.13);"></div>
<div class="a" style="left:1593px;top:85px;width:321px;height:22px;background:#1c1c1c;"></div>
<div class="a" style="left:1593px;top:85px;width:40px;height:22px;background:#444444;border-radius:4px 4px 0 0;"></div>
<div class="a t" style="left:1598px;top:86px;height:22px;line-height:22px;color:#f0f0f0;letter-spacing:0.08px;">Color</div>
<div class="a" style="left:1634px;top:85px;width:69px;height:22px;background:#232323;border-radius:4px 4px 0 0;"></div>
<div class="a t" style="left:1639px;top:86px;height:22px;line-height:22px;color:#f0f0f0;letter-spacing:-0.30px;">Add Layers</div>
<div class="a" style="left:1593px;top:107px;width:307px;height:377px;background:#444444;"></div>
<div class="a" style="left:1900px;top:107px;width:14px;height:377px;background:#2d2d2d;"></div>
<div class="a" style="left:1902px;top:108px;width:10px;height:303px;background:#4e4e4e;border-radius:5px;"></div>
<div class="a" style="left:1646px;top:119.5px;width:200px;height:200px;border-radius:50%;background:conic-gradient(from 90deg,#ff0000,#ff00ff,#0000ff,#00ffff,#00ff00,#ffff00,#ff0000);-webkit-mask:radial-gradient(circle,transparent 73.500px,#000 74.500px);mask:radial-gradient(circle,transparent 73.500px,#000 74.500px);"></div>
<div class="a" style="left:1702px;top:176px;width:90px;height:90px;background:linear-gradient(to right,#000,rgba(0,0,0,0)),linear-gradient(to bottom,#fff,#f00);"></div>
<svg class="a" style="left:1738px;top:169px;" width="14" height="14" viewBox="0 0 14 14"><circle cx="7" cy="7" r="6" fill="none" stroke="#e8e8e8" stroke-width="1"/></svg>
<svg class="a" style="left:1826px;top:213px;" width="14" height="14" viewBox="0 0 14 14"><circle cx="7" cy="7" r="6" fill="none" stroke="#f0f0f0" stroke-width="1"/></svg>
<div class="a" style="left:1600px;top:333px;width:22px;height:22px;background:#7a7a7a;border-radius:3px;"></div>
<div class="a t" style="left:1625px;top:335px;height:20px;line-height:20px;color:#f0f0f0;letter-spacing:-0.33px;">Gray</div>
<div class="a" style="left:1871px;top:333px;width:22px;height:21px;background:#2b2b2b;border-radius:4px;border:1px solid #252525;box-sizing:border-box;box-shadow:inset 0 1px 0 rgba(255,255,255,0.13);"></div>
<svg class="a" style="left:1875px;top:337px;" width="14" height="14" viewBox="0 0 14 14"><path d="M1 12.5L2 9.5L7.5 4L9.5 6L4 11.5z" fill="none" stroke="#d8d8d8" stroke-width="1"/><path d="M7 3L10.5 6.5M8.200 4.300L10.500 1.500Q11.500 0.800 12.300 1.700Q13 2.600 12 3.500L9.500 5.800z" fill="#d8d8d8" stroke="#d8d8d8" stroke-width="1"/></svg>
<div class="a" style="left:1600px;top:361px;width:50px;height:17px;background:#444444;border-radius:2px;border:1px solid #5c5c5c;box-sizing:border-box;"></div>
<div class="a t" style="left:1603px;top:362px;height:17px;line-height:17px;color:#f0f0f0;letter-spacing:-0.17px;">Hex</div>
<svg class="a" style="left:1636px;top:367px;" width="10" height="6" viewBox="0 0 10 6"><path d="M0.5 0.5L5 5L9.5 0.5" fill="none" stroke="#d0d0d0" stroke-width="1.1"/></svg>
<div class="a" style="left:1653px;top:359px;width:240px;height:21px;background:#262626;border-radius:3px;"></div>
<div class="a t" style="left:1658px;top:360px;height:21px;line-height:21px;color:#5a5a5a;">#</div>
<div class="a t" style="left:1670px;top:360px;height:21px;line-height:21px;color:#f0f0f0;letter-spacing:-0.21px;">7a7a7a</div>
<div class="a" style="left:1600px;top:390.5px;width:233px;height:3.5px;background:#e4e4e4;border-radius:2px;"></div>
<svg class="a" style="left:1828px;top:386px;" width="12" height="12" viewBox="0 0 12 12"><circle cx="6" cy="6" r="5.200" fill="#7ad4b8" stroke="#2a2a2a" stroke-width="1"/><circle cx="6" cy="6" r="1.800" fill="#5ab898"/></svg>
<div class="a" style="left:1849px;top:384px;width:44px;height:16px;background:#2a2a2a;border-radius:3px;"></div>
<div class="a t" style="left:1853px;top:385px;height:16px;line-height:16px;color:#5a5a5a;">A</div>
<div class="a t" style="left:1866px;top:385px;height:16px;line-height:16px;color:#f0f0f0;letter-spacing:-0.01px;">255</div>
<div class="a" style="left:1597px;top:406px;width:299px;height:78px;background:#1c1c1c;"></div>
<div class="a" style="left:1599px;top:408px;width:148px;height:20px;background:#444444;border-radius:4px 4px 0 0;"></div>
<div class="a t" style="left:1648px;top:408px;height:20px;line-height:20px;color:#f0f0f0;letter-spacing:-0.43px;">Swatches</div>
<div class="a" style="left:1748px;top:408px;width:146.5px;height:20px;background:#2a2a2a;border-radius:4px 4px 0 0;"></div>
<div class="a t" style="left:1793.5px;top:408px;height:20px;line-height:20px;color:#c0c0c0;letter-spacing:-0.00px;">Generator</div>
<div class="a" style="left:1597px;top:428px;width:299px;height:56px;background:#444444;"></div>
<div class="a" style="left:1598px;top:431px;width:257px;height:18px;background:#5a5a5a;border-radius:3px;"></div>
<div class="a" style="left:1599px;top:432px;width:62px;height:16px;background:#262626;border-radius:3px;"></div>
<svg class="a" style="left:1605px;top:435px;" width="11" height="10" viewBox="0 0 11 10"><path d="M1 0v10M4 0v10M6.500 0.500l3.500 9.500" stroke="#2ecc71" stroke-width="1.600" fill="none"/></svg>
<div class="a t" style="left:1621px;top:432px;height:18px;line-height:18px;color:#f0f0f0;letter-spacing:0.05px;">Library</div>
<svg class="a" style="left:1670px;top:434px;" width="12" height="12" viewBox="0 0 12 12"><path d="M0.500 2.500h4l1 1.500h5.500v7h-10.500z" fill="none" stroke="#d0d0d0" stroke-width="1.100"/><path d="M2.500 6.500h1M4.500 6.500h4.500M2.500 8.700h1M4.500 8.700h4.500" stroke="#d0d0d0" stroke-width="1.100"/></svg>
<div class="a t" style="left:1686px;top:432px;height:18px;line-height:18px;color:#f0f0f0;letter-spacing:0.03px;">Project</div>
<svg class="a" style="left:1737px;top:434px;" width="10" height="12" viewBox="0 0 10 12"><path d="M1 0.500h4.500l3 3v7.500h-7.500z" fill="none" stroke="#d0d0d0" stroke-width="1.100"/><path d="M5.500 0.500v3h3" fill="none" stroke="#d0d0d0" stroke-width="1"/></svg>
<div class="a t" style="left:1752px;top:432px;height:18px;line-height:18px;color:#f0f0f0;letter-spacing:-0.76px;">Scene</div>
<svg class="a" style="left:1801px;top:435px;" width="11" height="10" viewBox="0 0 11 10"><path d="M0.500 2.500Q0.500 0.500 2.500 0.500H8Q10 0.500 10 2.500V5L6 9.500H2.500Q0.500 9.500 0.500 7.500z" fill="none" stroke="#d0d0d0" stroke-width="1.100"/><path d="M6 9V6.500Q6 5.500 7 5.500H10" fill="none" stroke="#d0d0d0" stroke-width="1"/></svg>
<div class="a t" style="left:1816px;top:432px;height:18px;line-height:18px;color:#f0f0f0;letter-spacing:-0.47px;">Labels</div>
<div class="a" style="left:1858px;top:431px;width:37px;height:18px;background:#5a5a5a;border-radius:3px;"></div>
<div class="a" style="left:1859px;top:432px;width:17px;height:16px;background:#262626;border-radius:3px;"></div>
<svg class="a" style="left:1863px;top:436px;" width="9" height="9" viewBox="0 0 9 9"><rect x="0" y="0" width="3.500" height="3.500" fill="#2ecc71"/><rect x="5.500" y="0" width="3.500" height="3.500" fill="#2ecc71"/><rect x="0" y="5.500" width="3.500" height="3.500" fill="#2ecc71"/><rect x="5.500" y="5.500" width="3.500" height="3.500" fill="#2ecc71"/></svg>
<svg class="a" style="left:1880.5px;top:436px;" width="11" height="9" viewBox="0 0 11 9"><path d="M0 1h11M0 4.500h11M0 8h11" stroke="#e0e0e0" stroke-width="1.100"/></svg>
<div class="a" style="left:1598px;top:453px;width:275px;height:16px;background:#3a3a3a;border-radius:2px;border:1px solid #505050;box-sizing:border-box;"></div>
<div class="a t" style="left:1601px;top:454px;height:16px;line-height:16px;color:#f0f0f0;letter-spacing:-0.51px;">new</div>
<svg class="a" style="left:1860.5px;top:459px;" width="10" height="6" viewBox="0 0 10 6"><path d="M0.5 0.5L5 5L9.5 0.5" fill="none" stroke="#d0d0d0" stroke-width="1.1"/></svg>
<div class="a" style="left:1880px;top:460px;width:2px;height:2px;background:#e0e0e0;"></div>
<div class="a" style="left:1885px;top:460px;width:2px;height:2px;background:#e0e0e0;"></div>
<div class="a" style="left:1890px;top:460px;width:2px;height:2px;background:#e0e0e0;"></div>
<div class="a" style="left:1598px;top:471px;width:297px;height:13px;background:#2a2a2a;"></div>
<div class="a" style="left:1600px;top:472px;width:18px;height:12px;background:#9b4dff;border-radius:3px 3px 0 0;"></div>
<div class="a" style="left:1622px;top:472px;width:18px;height:12px;background:#4a9eff;border-radius:3px 3px 0 0;"></div>
<div class="a" style="left:1644px;top:472px;width:18px;height:12px;background:#ff7a4f;border-radius:3px 3px 0 0;"></div>
<div class="a" style="left:1666px;top:472px;width:18px;height:12px;background:#4dffb0;border-radius:3px 3px 0 0;"></div>
<div class="a" style="left:1688px;top:472px;width:18px;height:12px;background:#ff4a5c;border-radius:3px 3px 0 0;"></div>
<div class="a" style="left:1710px;top:472px;width:18px;height:12px;background:#ff4ab8;border-radius:3px 3px 0 0;"></div>
<div class="a" style="left:1732px;top:472px;width:18px;height:12px;background:#ffd24a;border-radius:3px 3px 0 0;"></div>
<div class="a" style="left:1754px;top:472px;width:18px;height:12px;background:#3a62d8;border-radius:3px 3px 0 0;"></div>
<div class="a" style="left:1776px;top:472px;width:18px;height:12px;background:#5ae0d0;border-radius:3px 3px 0 0;"></div>
<div class="a" style="left:1798px;top:472px;width:18px;height:12px;background:#d880d8;border-radius:3px 3px 0 0;"></div>
<div class="a" style="left:1820px;top:472px;width:18px;height:12px;background:#b0e888;border-radius:3px 3px 0 0;"></div>
<div class="a" style="left:1842px;top:472px;width:18px;height:12px;background:#6a4aff;border-radius:3px 3px 0 0;"></div>
<div class="a" style="left:1593px;top:490px;width:321px;height:22px;background:#1c1c1c;"></div>
<div class="a" style="left:1593px;top:490px;width:38px;height:22px;background:#444444;border-radius:4px 4px 0 0;"></div>
<div class="a t" style="left:1598.5px;top:491px;height:22px;line-height:22px;color:#f0f0f0;letter-spacing:-0.05px;">Align</div>
<div class="a" style="left:1593px;top:512px;width:321px;height:68px;background:#444444;"></div>
<div class="a t" style="left:1601.5px;top:522px;height:20px;line-height:20px;color:#f0f0f0;letter-spacing:-0.05px;">Alignment</div>
<div class="a t" style="left:1601.5px;top:550px;height:20px;line-height:20px;color:#f0f0f0;letter-spacing:0.27px;">Distribution</div>
<div class="a" style="left:1790.5px;top:522.5px;width:18px;height:17px;background:#2b2b2b;border-radius:3px;border:1px solid #252525;box-sizing:border-box;box-shadow:inset 0 1px 0 rgba(255,255,255,0.13);"></div>
<svg class="a" style="left:1790.5px;top:522.5px;" width="18" height="17" viewBox="0 0 18 17"><path d="M3.500 3v11" stroke="#e8e8e8" stroke-width="1"/><rect x="6" y="5" width="5" height="2" fill="#e8e8e8"/><rect x="6" y="10" width="9" height="2" fill="#e8e8e8"/></svg>
<div class="a" style="left:1808px;top:522.5px;width:18px;height:17px;background:#2b2b2b;border-radius:3px;border:1px solid #252525;box-sizing:border-box;box-shadow:inset 0 1px 0 rgba(255,255,255,0.13);"></div>
<svg class="a" style="left:1808px;top:522.5px;" width="18" height="17" viewBox="0 0 18 17"><path d="M9 3v11" stroke="#e8e8e8" stroke-width="1"/><rect x="5.500" y="5" width="7" height="2" fill="#e8e8e8"/><rect x="3.500" y="10" width="11" height="2" fill="#e8e8e8"/></svg>
<div class="a" style="left:1825.5px;top:522.5px;width:18px;height:17px;background:#2b2b2b;border-radius:3px;border:1px solid #252525;box-sizing:border-box;box-shadow:inset 0 1px 0 rgba(255,255,255,0.13);"></div>
<svg class="a" style="left:1825.5px;top:522.5px;" width="18" height="17" viewBox="0 0 18 17"><path d="M14.500 3v11" stroke="#e8e8e8" stroke-width="1"/><rect x="7" y="5" width="5" height="2" fill="#e8e8e8"/><rect x="3" y="10" width="9" height="2" fill="#e8e8e8"/></svg>
<div class="a" style="left:1852.5px;top:522.5px;width:18px;height:17px;background:#2b2b2b;border-radius:3px;border:1px solid #252525;box-sizing:border-box;box-shadow:inset 0 1px 0 rgba(255,255,255,0.13);"></div>
<svg class="a" style="left:1852.5px;top:522.5px;" width="18" height="17" viewBox="0 0 18 17"><path d="M3 3.500h12" stroke="#e8e8e8" stroke-width="1"/><rect x="5.500" y="6" width="2" height="8" fill="#e8e8e8"/><rect x="10.500" y="6" width="2" height="5" fill="#e8e8e8"/></svg>
<div class="a" style="left:1870px;top:522.5px;width:18px;height:17px;background:#2b2b2b;border-radius:3px;border:1px solid #252525;box-sizing:border-box;box-shadow:inset 0 1px 0 rgba(255,255,255,0.13);"></div>
<svg class="a" style="left:1870px;top:522.5px;" width="18" height="17" viewBox="0 0 18 17"><path d="M3 8.500h12" stroke="#e8e8e8" stroke-width="1"/><rect x="5.500" y="3.500" width="2" height="10" fill="#e8e8e8"/><rect x="10.500" y="5.500" width="2" height="6" fill="#e8e8e8"/></svg>
<div class="a" style="left:1887.5px;top:522.5px;width:18px;height:17px;background:#2b2b2b;border-radius:3px;border:1px solid #252525;box-sizing:border-box;box-shadow:inset 0 1px 0 rgba(255,255,255,0.13);"></div>
<svg class="a" style="left:1887.5px;top:522.5px;" width="18" height="17" viewBox="0 0 18 17"><path d="M3 13.500h12" stroke="#e8e8e8" stroke-width="1"/><rect x="5.500" y="6" width="2" height="5" fill="#e8e8e8"/><rect x="10.500" y="3" width="2" height="8" fill="#e8e8e8"/></svg>
<div class="a" style="left:1790.5px;top:550.5px;width:18px;height:17px;background:#2b2b2b;border-radius:3px;border:1px solid #252525;box-sizing:border-box;box-shadow:inset 0 1px 0 rgba(255,255,255,0.13);"></div>
<svg class="a" style="left:1790.5px;top:550.5px;" width="18" height="17" viewBox="0 0 18 17"><path d="M3.500 3v11" stroke="#e8e8e8" stroke-width="1"/><rect x="8" y="3" width="2.500" height="11" fill="#e8e8e8"/><path d="M14.500 3v11" stroke="#e8e8e8" stroke-width="1"/></svg>
<div class="a" style="left:1808px;top:550.5px;width:18px;height:17px;background:#2b2b2b;border-radius:3px;border:1px solid #252525;box-sizing:border-box;box-shadow:inset 0 1px 0 rgba(255,255,255,0.13);"></div>
<svg class="a" style="left:1808px;top:550.5px;" width="18" height="17" viewBox="0 0 18 17"><path d="M3 3.500h12M3 13.500h12" stroke="#e8e8e8" stroke-width="1"/><rect x="4.500" y="7.500" width="9" height="2.500" fill="#e8e8e8"/></svg>
<div class="a" style="left:1825.5px;top:550.5px;width:18px;height:17px;background:#2b2b2b;border-radius:3px;border:1px solid #252525;box-sizing:border-box;box-shadow:inset 0 1px 0 rgba(255,255,255,0.13);"></div>
<svg class="a" style="left:1825.5px;top:550.5px;" width="18" height="17" viewBox="0 0 18 17"><path d="M3 5V3.500h1.500M13.500 3.500H15V5M15 12v1.500h-1.500M4.500 13.500H3V12" fill="none" stroke="#e8e8e8" stroke-width="1"/><rect x="4" y="10" width="2.500" height="2.500" fill="#e8e8e8"/><rect x="7.500" y="7" width="2.500" height="2.500" fill="#e8e8e8"/><rect x="11" y="4.500" width="2.500" height="2.500" fill="#e8e8e8"/></svg>
<div class="a" style="left:494px;top:586px;width:1420px;height:22px;background:#1c1c1c;"></div>
<div class="a" style="left:494px;top:586px;width:89px;height:22px;background:#444444;border-radius:4px 4px 0 0;"></div>
<div class="a t" style="left:499px;top:587px;height:22px;line-height:22px;color:#f0f0f0;letter-spacing:-0.19px;">Scene Window</div>
<div class="a" style="left:584px;top:586px;width:100px;height:22px;background:#232323;border-radius:4px 4px 0 0;"></div>
<div class="a t" style="left:589px;top:587px;height:22px;line-height:22px;color:#f0f0f0;letter-spacing:-0.11px;">JavaScript Editor</div>
<div class="a" style="left:685px;top:586px;width:112px;height:22px;background:#232323;border-radius:4px 4px 0 0;"></div>
<div class="a t" style="left:690px;top:587px;height:22px;line-height:22px;color:#f0f0f0;letter-spacing:-0.14px;">Dependency Graph</div>
<div class="a" style="left:494px;top:608px;width:1420px;height:390px;background:#2a2a2a;"></div>
<div class="a" style="left:499px;top:610px;width:1411px;height:20px;background:#444444;border-radius:3px 3px 0 0;"></div>
<div class="a t" style="left:1166px;top:610px;height:20px;line-height:20px;color:#f0f0f0;letter-spacing:-0.06px;">Composition 1</div>
<div class="a" style="left:494px;top:630px;width:699px;height:42px;background:#444444;"></div>
<div class="a" style="left:497px;top:633px;width:488px;height:19px;background:#262626;border-radius:10px;"></div>
<svg class="a" style="left:500px;top:636px;" width="14" height="14" viewBox="0 0 14 14"><circle cx="5.500" cy="5.500" r="4.5" fill="none" stroke="#e0e0e0" stroke-width="1.1"/><path d="M9 9L12.5 12.5" stroke="#e0e0e0" stroke-width="1.8"/></svg>
<div class="a t" style="left:520px;top:634px;height:19px;line-height:19px;color:#8c8c8c;letter-spacing:-0.26px;">Enter a layer name</div>
<div class="a" style="left:987px;top:632.5px;width:20px;height:20px;background:#2b2b2b;border-radius:4px;border:1px solid #252525;box-sizing:border-box;box-shadow:inset 0 1px 0 rgba(255,255,255,0.13);"></div>
<svg class="a" style="left:987px;top:632.5px;" width="20" height="20" viewBox="0 0 20 20"><path d="M10 5v10M5 10h10" stroke="#f0f0f0" stroke-width="1.600"/><path d="M18.500 18.500h-3l3-3z" fill="#5fd3a0"/></svg>
<div class="a" style="left:1031.5px;top:632px;width:19px;height:20px;background:#2b2b2b;border-radius:4px;border:1px solid #252525;box-sizing:border-box;box-shadow:inset 0 1px 0 rgba(255,255,255,0.13);"></div>
<svg class="a" style="left:1031.5px;top:632px;" width="19" height="20" viewBox="0 0 19 20"><circle cx="12" cy="7.500" r="4" fill="#d8d8d8"/><path d="M7.500 7Q5 11 9 13.500" fill="none" stroke="#9a9a9a" stroke-width="1.200"/><path d="M5.500 9Q3 14 9 16" fill="none" stroke="#6a6a6a" stroke-width="1.200"/></svg>
<div class="a" style="left:1053.5px;top:632px;width:19px;height:20px;background:#2b2b2b;border-radius:4px;border:1px solid #252525;box-sizing:border-box;box-shadow:inset 0 1px 0 rgba(255,255,255,0.13);"></div>
<svg class="a" style="left:1053.5px;top:632px;" width="19" height="20" viewBox="0 0 19 20"><g transform="translate(0.500 1)"><circle cx="6" cy="5" r="1.100" fill="#c8c8c8"/><circle cx="12" cy="5.800" r="1.100" fill="#c8c8c8"/><circle cx="6" cy="11" r="1.100" fill="#c8c8c8"/><path d="M11 8.200Q11.400 11.300 14.500 11.700Q11.400 12.100 11 15.200Q10.600 12.100 7.500 11.700Q10.600 11.300 11 8.200z" fill="#e8e8e8"/><path d="M16.300 16.300h-2.600l2.600-2.600z" fill="#5fd3a0"/></g></svg>
<div class="a" style="left:1075.5px;top:632px;width:19px;height:20px;background:#2b2b2b;border-radius:4px;border:1px solid #252525;box-sizing:border-box;box-shadow:inset 0 1px 0 rgba(255,255,255,0.13);"></div>
<svg class="a" style="left:1075.5px;top:632px;" width="19" height="20" viewBox="0 0 19 20"><path d="M3 5h4M10 5h6M3 10h7M13 10h3M3 15h3M9 15h7" stroke="#e0e0e0" stroke-width="1"/><circle cx="8.500" cy="5" r="1.500" fill="none" stroke="#e0e0e0" stroke-width="1"/><circle cx="11.500" cy="10" r="1.500" fill="none" stroke="#e0e0e0" stroke-width="1"/><circle cx="7.500" cy="15" r="1.500" fill="none" stroke="#e0e0e0" stroke-width="1"/><path d="M18 18.500h-3l3-3z" fill="#5fd3a0"/></svg>
<div class="a" style="left:1097px;top:631px;width:94px;height:22px;background:#262626;border-radius:2px;"></div>
<div class="a t" style="left:1102px;top:633px;height:21px;line-height:21px;color:#555555;">F</div>
<div class="a t" style="left:1114.5px;top:633px;height:21px;line-height:21px;color:#f0f0f0;letter-spacing:0.24px;">120</div>
<svg class="a" style="left:500px;top:656.5px;" width="10" height="13" viewBox="0 0 10 13"><rect x="0.500" y="5.500" width="9" height="7" rx="1" fill="#c8c8c8"/><path d="M2.500 5.500V3.500Q2.500 1 5 1Q7.500 1 7.500 3.500V5.500" fill="none" stroke="#c8c8c8" stroke-width="1.300"/><rect x="4.300" y="8" width="1.400" height="2.500" fill="#444"/></svg>
<svg class="a" style="left:517px;top:658px;" width="14" height="10" viewBox="0 0 14 10"><path d="M0.700 5C3 1.300 5.500 0.500 7 0.500S11 1.300 13.300 5C11 8.700 8.500 9.500 7 9.500S3 8.700 0.700 5z" fill="none" stroke="#c8c8c8" stroke-width="1"/><circle cx="7" cy="5" r="2.200" fill="#9a9a9a"/></svg>
<svg class="a" style="left:536px;top:656px;" width="14" height="15" viewBox="0 0 14 15"><path d="M7 1L13 4V11L7 14L1 11V4z M1 4L7 7L13 4M7 7V14" fill="none" stroke="#c8c8c8" stroke-width="1.100" stroke-linejoin="round"/></svg>
<svg class="a" style="left:555px;top:656.5px;" width="15" height="13" viewBox="0 0 15 13"><path d="M0.500 4.500h2.500l3.500-3.500v11l-3.500-3.500h-2.500z" fill="#c8c8c8"/><path d="M8.500 4Q10 6.500 8.500 9M10.500 2Q13.500 6.500 10.500 11" fill="none" stroke="#c8c8c8" stroke-width="1.200"/></svg>
<svg class="a" style="left:574px;top:656px;" width="14" height="14" viewBox="0 0 14 14"><path d="M1 12.5L2 9.5L7.5 4L9.5 6L4 11.5z" fill="none" stroke="#c8c8c8" stroke-width="1"/><path d="M7 3L10.5 6.5M8.200 4.300L10.500 1.500Q11.500 0.800 12.300 1.700Q13 2.600 12 3.500L9.500 5.800z" fill="#c8c8c8" stroke="#c8c8c8" stroke-width="1"/></svg>
<svg class="a" style="left:593px;top:658.5px;" width="14" height="10" viewBox="0 0 14 10"><path d="M0.300 5L4 0.800h9.700v8.400H4z" fill="#c8c8c8"/><circle cx="4.800" cy="5" r="1.800" fill="#444"/></svg>
<div class="a t" style="left:649px;top:654px;height:20px;line-height:20px;color:#f0f0f0;letter-spacing:-0.34px;">Name</div>
<div class="a" style="left:497px;top:673px;width:681px;height:20px;background:#5a5443;border-radius:0 4px 4px 0;"></div>
<div class="a" style="left:494px;top:694px;width:685px;height:66px;background:#333333;"></div>
<div class="a" style="left:496.3px;top:674px;width:17.5px;height:18px;background:#282828;border-radius:2px;"></div>
<div class="a" style="left:515.2px;top:674px;width:17.5px;height:18px;background:#282828;border-radius:2px;"></div>
<div class="a" style="left:534.2px;top:674px;width:17.5px;height:18px;background:#282828;border-radius:2px;"></div>
<svg class="a" style="left:517.5px;top:678px;" width="14" height="10" viewBox="0 0 14 10"><path d="M0.700 5C3 1.300 5.500 0.500 7 0.500S11 1.300 13.300 5C11 8.700 8.500 9.500 7 9.500S3 8.700 0.700 5z" fill="none" stroke="#d8d8d8" stroke-width="1"/><circle cx="7" cy="5" r="2.200" fill="#b0b0b0"/></svg>
<div class="a" style="left:573px;top:674.7px;width:16px;height:16.3px;background:#ffe97a;border-radius:3px;border:1px solid #2a2410;box-sizing:border-box;"></div>
<svg class="a" style="left:593px;top:678px;" width="14" height="10" viewBox="0 0 14 10"><path d="M0.300 5L4 0.800h9.700v8.400H4z" fill="#d8d8d8"/><circle cx="4.800" cy="5" r="1.800" fill="#5a5443"/></svg>
<div class="a" style="left:610px;top:675px;width:32px;height:15.5px;background:#2b2b2b;border-radius:2px;"></div>
<div class="a" style="left:610px;top:675px;width:15px;height:15.5px;background:#303030;border-radius:2px 0 0 2px;"></div>
<svg class="a" style="left:614px;top:681px;" width="8" height="5" viewBox="0 0 8 5"><path d="M0.500 0.500L4 4L7.500 0.500" fill="none" stroke="#9a9a9a" stroke-width="1"/></svg>
<svg class="a" style="left:629.6px;top:679px;" width="8" height="8" viewBox="0 0 8 8"><circle cx="4" cy="4" r="3" fill="#d8d8d8"/></svg>
<svg class="a" style="left:649px;top:677px;" width="13" height="13" viewBox="0 0 13 13"><path d="M3.200 0.900H9.300M3.200 11.600H9.300M0.900 3.200V9.300M11.600 3.200V9.300" fill="none" stroke="#f2e27a" stroke-width="1.200"/><rect x="0" y="0" width="2" height="2" fill="#e8e8e8"/><rect x="10.500" y="0" width="2" height="2" fill="#e8e8e8"/><rect x="0" y="10.500" width="2" height="2" fill="#e8e8e8"/><rect x="10.500" y="10.500" width="2" height="2" fill="#e8e8e8"/></svg>
<div class="a t" style="left:667px;top:674px;height:21px;line-height:21px;color:#f0f0f0;letter-spacing:-0.08px;">CenterRectangle</div>
<svg class="a" style="left:1165px;top:678px;" width="10" height="10" viewBox="0 0 10 10"><circle cx="5" cy="5" r="3.800" fill="none" stroke="#8a8a8a" stroke-width="1.100"/></svg>
<svg class="a" style="left:630px;top:694px;" width="20" height="50" viewBox="0 0 20 50"><path d="M4.500 1V35" stroke="#d0d0d0" stroke-width="1" stroke-dasharray="1 1.500" fill="none"/><path d="M5 12.500h9M5 34.500h9" stroke="#d0d0d0" stroke-width="1" stroke-dasharray="1 1" fill="none"/></svg>
<div class="a t" style="left:647px;top:696px;height:21px;line-height:21px;color:#f0f0f0;letter-spacing:-0.26px;">Rectangle.Corner Radius</div>
<div class="a t" style="left:647px;top:718px;height:21px;line-height:21px;color:#f0f0f0;letter-spacing:-0.38px;">Rectangle.Size.H</div>
<div class="a" style="left:1081px;top:697px;width:84px;height:15.5px;background:#262626;border-radius:3px 0 0 3px;"></div>
<div class="a" style="left:1165px;top:697px;width:10px;height:15.5px;background:#303030;border-radius:0 3px 3px 0;"></div>
<div class="a t" style="left:1085.5px;top:698px;height:15.5px;line-height:15.5px;color:#6a6a6a;">#</div>
<div class="a t" style="left:1098px;top:698px;height:15.5px;line-height:15.5px;color:#f0f0f0;letter-spacing:-0.34px;">0.0</div>
<svg class="a" style="left:1152.5px;top:700.3px;" width="9" height="9" viewBox="0 0 9 9"><path d="M4.500 0.300L8.700 4.500L4.500 8.700L0.300 4.500z" fill="#d0d0d0"/></svg>
<svg class="a" style="left:1167px;top:701.3px;" width="6" height="7" viewBox="0 0 6 7"><path d="M0 0h2l3.500 3.500-3.500 3.500h-2z" fill="#8a8a8a"/></svg>
<div class="a" style="left:1081px;top:719px;width:84px;height:15.5px;background:#262626;border-radius:3px 0 0 3px;"></div>
<div class="a" style="left:1165px;top:719px;width:10px;height:15.5px;background:#303030;border-radius:0 3px 3px 0;"></div>
<div class="a t" style="left:1085.5px;top:720px;height:15.5px;line-height:15.5px;color:#6a6a6a;">H</div>
<div class="a t" style="left:1098px;top:720px;height:15.5px;line-height:15.5px;color:#f0f0f0;letter-spacing:-0.01px;">230.0</div>
<svg class="a" style="left:1152.5px;top:722.3px;" width="9" height="9" viewBox="0 0 9 9"><path d="M4.500 0.300L8.700 4.500L4.500 8.700L0.300 4.500z" fill="#2ecc71"/></svg>
<svg class="a" style="left:1167px;top:723.3px;" width="6" height="7" viewBox="0 0 6 7"><path d="M0 0h2l3.500 3.500-3.500 3.500h-2z" fill="#8a8a8a"/></svg>
<div class="a" style="left:496.3px;top:740px;width:17.5px;height:18px;background:#282828;border-radius:2px;"></div>
<div class="a" style="left:515.2px;top:740px;width:17.5px;height:18px;background:#282828;border-radius:2px;"></div>
<div class="a" style="left:534.2px;top:740px;width:17.5px;height:18px;background:#282828;border-radius:2px;"></div>
<svg class="a" style="left:517.5px;top:744px;" width="14" height="10" viewBox="0 0 14 10"><path d="M0.700 5C3 1.300 5.500 0.500 7 0.500S11 1.300 13.300 5C11 8.700 8.500 9.500 7 9.500S3 8.700 0.700 5z" fill="none" stroke="#d8d8d8" stroke-width="1"/><circle cx="7" cy="5" r="2.200" fill="#b0b0b0"/></svg>
<div class="a" style="left:573px;top:740.7px;width:16px;height:16.3px;background:#ffe97a;border-radius:3px;border:1px solid #2a2410;box-sizing:border-box;"></div>
<svg class="a" style="left:593px;top:744px;" width="14" height="10" viewBox="0 0 14 10"><path d="M0.300 5L4 0.800h9.700v8.400H4z" fill="#d8d8d8"/><circle cx="4.800" cy="5" r="1.800" fill="#333"/></svg>
<svg class="a" style="left:649px;top:743px;" width="13" height="13" viewBox="0 0 13 13"><path d="M3.200 0.900H9.300M3.200 11.600H9.300M0.900 3.200V9.300M11.600 3.200V9.300" fill="none" stroke="#f2e27a" stroke-width="1.200"/><rect x="0" y="0" width="2" height="2" fill="#e8e8e8"/><rect x="10.500" y="0" width="2" height="2" fill="#e8e8e8"/><rect x="0" y="10.500" width="2" height="2" fill="#e8e8e8"/><rect x="10.500" y="10.500" width="2" height="2" fill="#e8e8e8"/></svg>
<div class="a t" style="left:667px;top:740px;height:21px;line-height:21px;color:#f0f0f0;letter-spacing:-0.24px;">RectangleBG</div>
<svg class="a" style="left:1165px;top:744px;" width="10" height="10" viewBox="0 0 10 10"><circle cx="5" cy="5" r="3.800" fill="none" stroke="#8a8a8a" stroke-width="1.100"/></svg>
<div class="a" style="left:1181.5px;top:673px;width:9.5px;height:288px;background:#4d4d4d;border-radius:5px;"></div>
<div class="a" style="left:494.5px;top:964px;width:683.5px;height:10px;background:#505050;border-radius:5px;"></div>
<div class="a" style="left:1179px;top:961px;width:14px;height:15px;background:#303030;"></div>
<div class="a" style="left:494px;top:976px;width:699px;height:22px;background:#444444;"></div>
<div class="a" style="left:497px;top:977px;width:20px;height:20px;background:#3c3c3c;border-radius:4px;border:1px solid #282828;box-sizing:border-box;"></div>
<svg class="a" style="left:500px;top:982.5px;" width="14" height="10" viewBox="0 0 14 10"><path d="M0.300 5L4 0.800h9.700v8.400H4z" fill="#cfcfcf"/><circle cx="4.800" cy="5" r="1.800" fill="#3c3c3c"/></svg>
<div class="a t" style="left:521px;top:978px;height:20px;line-height:20px;color:#f0f0f0;letter-spacing:-0.30px;">1 selected</div>
<div class="a" style="left:984.5px;top:978px;width:20px;height:18px;background:#2b2b2b;border-radius:4px;border:1px solid #252525;box-sizing:border-box;box-shadow:inset 0 1px 0 rgba(255,255,255,0.13);"></div>
<svg class="a" style="left:984.5px;top:978px;" width="20" height="18" viewBox="0 0 20 18"><rect x="5" y="4" width="10" height="10" fill="none" stroke="#e0e0e0" stroke-width="1"/><circle cx="10" cy="9" r="2" fill="#e0e0e0"/></svg>
<div class="a" style="left:1007px;top:978px;width:183px;height:18px;background:#5a5a5a;border-radius:3px;"></div>
<div class="a" style="left:1008px;top:979px;width:86px;height:16px;background:#262626;border-radius:3px;"></div>
<svg class="a" style="left:1015px;top:982px;" width="12" height="10" viewBox="0 0 12 10"><path d="M0 1h11M2.500 5h8M0 9h9" stroke="#2ecc71" stroke-width="1.800"/></svg>
<div class="a t" style="left:1030.5px;top:979px;height:18px;line-height:18px;color:#f0f0f0;letter-spacing:-0.04px;">Time Editor</div>
<svg class="a" style="left:1101px;top:981px;" width="13" height="12" viewBox="0 0 13 12"><path d="M1.500 0v11.500M0 10.500h12.500" stroke="#d8d8d8" stroke-width="1" fill="none"/><path d="M3 8.500L11 3.500" stroke="#d8d8d8" stroke-width="1"/></svg>
<div class="a t" style="left:1119.5px;top:979px;height:18px;line-height:18px;color:#f0f0f0;letter-spacing:-0.09px;">Graph Editor</div>
<div class="a" style="left:1193px;top:630px;width:4.5px;height:368px;background:#2a2a2a;"></div>
<div class="a" style="left:1194.5px;top:810px;width:1.5px;height:2px;background:#6a6a6a;"></div>
<div class="a" style="left:1194.5px;top:815px;width:1.5px;height:2px;background:#6a6a6a;"></div>
<div class="a" style="left:1194.5px;top:820px;width:1.5px;height:2px;background:#6a6a6a;"></div>
<div class="a" style="left:1197.5px;top:630px;width:716.5px;height:24px;background:#292929;"></div>
<div class="a" style="left:1197.5px;top:654px;width:9.5px;height:308px;background:#1c1c1c;"></div>
<div class="a" style="left:1207px;top:654px;width:700px;height:16px;background:#444444;"></div>
<div class="a" style="left:1202px;top:653px;width:5px;height:18px;background:#6fd0b4;border-radius:1px;"></div>
<div class="a" style="left:1906.5px;top:653px;width:5px;height:18px;background:#6fd0b4;border-radius:1px;"></div>
<svg class="a" style="left:1197.5px;top:630px;" width="716" height="24" viewBox="0 0 716 24"><rect x="9.0" y="16" width="1" height="8" fill="#8a8a8a"/><rect x="17.4" y="20" width="1" height="4" fill="#6e6e6e"/><rect x="25.8" y="20" width="1" height="4" fill="#6e6e6e"/><rect x="34.2" y="20" width="1" height="4" fill="#6e6e6e"/><rect x="42.6" y="20" width="1" height="4" fill="#6e6e6e"/><rect x="51.0" y="16" width="1" height="8" fill="#8a8a8a"/><rect x="59.4" y="20" width="1" height="4" fill="#6e6e6e"/><rect x="67.8" y="20" width="1" height="4" fill="#6e6e6e"/><rect x="76.2" y="20" width="1" height="4" fill="#6e6e6e"/><rect x="84.6" y="20" width="1" height="4" fill="#6e6e6e"/><rect x="93.0" y="16" width="1" height="8" fill="#8a8a8a"/><rect x="101.4" y="20" width="1" height="4" fill="#6e6e6e"/><rect x="109.8" y="20" width="1" height="4" fill="#6e6e6e"/><rect x="118.2" y="20" width="1" height="4" fill="#6e6e6e"/><rect x="126.6" y="20" width="1" height="4" fill="#6e6e6e"/><rect x="135.0" y="16" width="1" height="8" fill="#8a8a8a"/><rect x="143.4" y="20" width="1" height="4" fill="#6e6e6e"/><rect x="151.8" y="20" width="1" height="4" fill="#6e6e6e"/><rect x="160.2" y="20" width="1" height="4" fill="#6e6e6e"/><rect x="168.6" y="20" width="1" height="4" fill="#6e6e6e"/><rect x="177.0" y="16" width="1" height="8" fill="#8a8a8a"/><rect x="185.4" y="20" width="1" height="4" fill="#6e6e6e"/><rect x="193.8" y="20" width="1" height="4" fill="#6e6e6e"/><rect x="202.2" y="20" width="1" height="4" fill="#6e6e6e"/><rect x="210.6" y="20" width="1" height="4" fill="#6e6e6e"/><rect x="219.0" y="16" width="1" height="8" fill="#8a8a8a"/><rect x="227.4" y="20" width="1" height="4" fill="#6e6e6e"/><rect x="235.8" y="20" width="1" height="4" fill="#6e6e6e"/><rect x="244.2" y="20" width="1" height="4" fill="#6e6e6e"/><rect x="252.6" y="20" width="1" height="4" fill="#6e6e6e"/><rect x="261.0" y="16" width="1" height="8" fill="#8a8a8a"/><rect x="269.4" y="20" width="1" height="4" fill="#6e6e6e"/><rect x="277.8" y="20" width="1" height="4" fill="#6e6e6e"/><rect x="286.2" y="20" width="1" height="4" fill="#6e6e6e"/><rect x="294.6" y="20" width="1" height="4" fill="#6e6e6e"/><rect x="303.0" y="16" width="1" height="8" fill="#8a8a8a"/><rect x="311.4" y="20" width="1" height="4" fill="#6e6e6e"/><rect x="319.8" y="20" width="1" height="4" fill="#6e6e6e"/><rect x="328.2" y="20" width="1" height="4" fill="#6e6e6e"/><rect x="336.6" y="20" width="1" height="4" fill="#6e6e6e"/><rect x="345.0" y="16" width="1" height="8" fill="#8a8a8a"/><rect x="353.4" y="20" width="1" height="4" fill="#6e6e6e"/><rect x="361.8" y="20" width="1" height="4" fill="#6e6e6e"/><rect x="370.2" y="20" width="1" height="4" fill="#6e6e6e"/><rect x="378.6" y="20" width="1" height="4" fill="#6e6e6e"/><rect x="387.0" y="16" width="1" height="8" fill="#8a8a8a"/><rect x="395.4" y="20" width="1" height="4" fill="#6e6e6e"/><rect x="403.8" y="20" width="1" height="4" fill="#6e6e6e"/><rect x="412.2" y="20" width="1" height="4" fill="#6e6e6e"/><rect x="420.6" y="20" width="1" height="4" fill="#6e6e6e"/><rect x="429.0" y="16" width="1" height="8" fill="#8a8a8a"/><rect x="437.4" y="20" width="1" height="4" fill="#6e6e6e"/><rect x="445.8" y="20" width="1" height="4" fill="#6e6e6e"/><rect x="454.2" y="20" width="1" height="4" fill="#6e6e6e"/><rect x="462.6" y="20" width="1" height="4" fill="#6e6e6e"/><rect x="471.0" y="16" width="1" height="8" fill="#8a8a8a"/><rect x="479.4" y="20" width="1" height="4" fill="#6e6e6e"/><rect x="487.8" y="20" width="1" height="4" fill="#6e6e6e"/><rect x="496.2" y="20" width="1" height="4" fill="#6e6e6e"/><rect x="504.6" y="20" width="1" height="4" fill="#6e6e6e"/><rect x="513.0" y="16" width="1" height="8" fill="#8a8a8a"/><rect x="521.4" y="20" width="1" height="4" fill="#6e6e6e"/><rect x="529.8" y="20" width="1" height="4" fill="#6e6e6e"/><rect x="538.2" y="20" width="1" height="4" fill="#6e6e6e"/><rect x="546.6" y="20" width="1" height="4" fill="#6e6e6e"/><rect x="555.0" y="16" width="1" height="8" fill="#8a8a8a"/><rect x="563.4" y="20" width="1" height="4" fill="#6e6e6e"/><rect x="571.8" y="20" width="1" height="4" fill="#6e6e6e"/><rect x="580.2" y="20" width="1" height="4" fill="#6e6e6e"/><rect x="588.6" y="20" width="1" height="4" fill="#6e6e6e"/><rect x="597.0" y="16" width="1" height="8" fill="#8a8a8a"/><rect x="605.4" y="20" width="1" height="4" fill="#6e6e6e"/><rect x="613.8" y="20" width="1" height="4" fill="#6e6e6e"/><rect x="622.2" y="20" width="1" height="4" fill="#6e6e6e"/><rect x="630.6" y="20" width="1" height="4" fill="#6e6e6e"/><rect x="639.0" y="16" width="1" height="8" fill="#8a8a8a"/><rect x="647.4" y="20" width="1" height="4" fill="#6e6e6e"/><rect x="655.8" y="20" width="1" height="4" fill="#6e6e6e"/><rect x="664.2" y="20" width="1" height="4" fill="#6e6e6e"/><rect x="672.6" y="20" width="1" height="4" fill="#6e6e6e"/><rect x="681.0" y="16" width="1" height="8" fill="#8a8a8a"/><rect x="689.4" y="20" width="1" height="4" fill="#6e6e6e"/><rect x="697.8" y="20" width="1" height="4" fill="#6e6e6e"/><rect x="706.2" y="20" width="1" height="4" fill="#6e6e6e"/></svg>
<div class="a t" style="left:1185.0px;top:632px;width:40px;text-align:center;line-height:14px;color:#d8d8d8;">0</div>
<div class="a t" style="left:1228.2px;top:632px;width:40px;text-align:center;line-height:14px;color:#d8d8d8;">15</div>
<div class="a t" style="left:1270.2px;top:632px;width:40px;text-align:center;line-height:14px;color:#d8d8d8;">30</div>
<div class="a t" style="left:1312.2px;top:632px;width:40px;text-align:center;line-height:14px;color:#d8d8d8;">45</div>
<div class="a t" style="left:1354.2px;top:632px;width:40px;text-align:center;line-height:14px;color:#d8d8d8;">60</div>
<div class="a t" style="left:1396.2px;top:632px;width:40px;text-align:center;line-height:14px;color:#d8d8d8;">75</div>
<div class="a t" style="left:1438.2px;top:632px;width:40px;text-align:center;line-height:14px;color:#d8d8d8;">90</div>
<div class="a t" style="left:1481.4px;top:632px;width:40px;text-align:center;line-height:14px;color:#d8d8d8;">105</div>
<div class="a t" style="left:1523.4px;top:632px;width:40px;text-align:center;line-height:14px;color:#d8d8d8;">120</div>
<div class="a t" style="left:1565.4px;top:632px;width:40px;text-align:center;line-height:14px;color:#d8d8d8;">135</div>
<div class="a t" style="left:1607.4px;top:632px;width:40px;text-align:center;line-height:14px;color:#d8d8d8;">150</div>
<div class="a t" style="left:1649.4px;top:632px;width:40px;text-align:center;line-height:14px;color:#d8d8d8;">165</div>
<div class="a t" style="left:1691.4px;top:632px;width:40px;text-align:center;line-height:14px;color:#d8d8d8;">180</div>
<div class="a t" style="left:1733.4px;top:632px;width:40px;text-align:center;line-height:14px;color:#d8d8d8;">195</div>
<div class="a t" style="left:1775.4px;top:632px;width:40px;text-align:center;line-height:14px;color:#d8d8d8;">210</div>
<div class="a t" style="left:1817.4px;top:632px;width:40px;text-align:center;line-height:14px;color:#d8d8d8;">225</div>
<div class="a t" style="left:1859.4px;top:632px;width:40px;text-align:center;line-height:14px;color:#d8d8d8;">240</div>
<svg class="a" style="left:1207px;top:674px" width="700" height="18"><defs><pattern id="dots" width="6" height="3" patternUnits="userSpaceOnUse"><rect width="6" height="3" fill="#fff680"/><rect x="0.500" y="0" width="2" height="1.500" fill="#cdb343"/><rect x="3.500" y="1.500" width="2" height="1.500" fill="#cdb343"/></pattern></defs><rect x="0.500" y="0.500" width="699" height="17" rx="3" fill="url(#dots)" stroke="#ffffff" stroke-width="1"/></svg>
<div class="a t" style="left:1215.5px;top:674px;height:18px;line-height:18px;color:#3c3a28;letter-spacing:-0.15px;">CenterRectangle</div>
<div class="a" style="left:1207px;top:740px;width:700px;height:18px;background:#ffe97f;border-radius:3px;"></div>
<div class="a t" style="left:1215.5px;top:740px;height:18px;line-height:18px;color:#3c3a28;letter-spacing:-0.34px;">RectangleBG</div>
<svg class="a" style="left:1197.5px;top:698px;" width="716" height="12" viewBox="0 0 716 12"><path d="M15.0 6H102.0" stroke="#f5e27a" stroke-width="2" fill="none"/><path d="M113.0 6H144.0" stroke="#f5e27a" stroke-width="2" fill="none"/><path d="M155.0 6H228.0" stroke="#f5e27a" stroke-width="2" fill="none"/><path d="M243.5 6H256.0" stroke="#f5e27a" stroke-width="2" stroke-dasharray="5 5" fill="none"/><path d="M267.0 6H326.0" stroke="#f5e27a" stroke-width="2" fill="none"/><path d="M341.5 6H410.0" stroke="#f5e27a" stroke-width="2" stroke-dasharray="5 5" fill="none"/><path d="M421.0 6H701.2" stroke="#f5e27a" stroke-width="2" fill="none"/><path d="M9.5 1.700L13.8 6L9.5 10.300L5.2 6z" fill="#c4c4c4"/><path d="M107.5 1.700L111.8 6L107.5 10.300L103.2 6z" fill="#c4c4c4"/><path d="M149.5 1.700L153.8 6L149.5 10.300L145.2 6z" fill="#c4c4c4"/><path d="M233.5 1.700L237.8 6L233.5 10.300L229.2 6z" fill="#c4c4c4"/><path d="M261.5 1.700L265.8 6L261.5 10.300L257.2 6z" fill="#c4c4c4"/><path d="M331.5 1.700L335.8 6L331.5 10.300L327.2 6z" fill="#c4c4c4"/><path d="M415.5 1.700L419.8 6L415.5 10.300L411.2 6z" fill="#c4c4c4"/><path d="M706.7 1.700L711.0 6L706.7 10.300L702.4 6z" fill="#c4c4c4"/></svg>
<svg class="a" style="left:1197.5px;top:720px;" width="716" height="12" viewBox="0 0 716 12"><path d="M37.4 6H88.0" stroke="#f5e27a" stroke-width="2" fill="none"/><path d="M99.0 6H160.8" stroke="#f5e27a" stroke-width="2" fill="none"/><path d="M176.3 6H205.6" stroke="#f5e27a" stroke-width="2" stroke-dasharray="5 5" fill="none"/><path d="M216.6 6H270.0" stroke="#f5e27a" stroke-width="2" fill="none"/><path d="M281.0 6H340.0" stroke="#f5e27a" stroke-width="2" fill="none"/><path d="M31.9 1.700L36.2 6L31.9 10.300L27.6 6z" fill="#c4c4c4"/><path d="M93.5 1.700L97.8 6L93.5 10.300L89.2 6z" fill="#c4c4c4"/><path d="M166.3 1.700L170.6 6L166.3 10.300L162.0 6z" fill="#c4c4c4"/><path d="M211.1 1.700L215.4 6L211.1 10.300L206.8 6z" fill="#c4c4c4"/><path d="M275.5 1.700L279.8 6L275.5 10.300L271.2 6z" fill="#c4c4c4"/><path d="M345.5 1.700L349.8 6L345.5 10.300L341.2 6z" fill="#c4c4c4"/></svg>
<div class="a" style="left:1542.3px;top:650px;width:1.7px;height:312px;background:#62a890;"></div>
<svg class="a" style="left:1535.8px;top:643.8px;" width="15" height="10" viewBox="0 0 15 10"><path d="M0 0h14.600L7.300 9.200z" fill="#72c8ac"/></svg>
<div class="a" style="left:1201px;top:964px;width:711px;height:10px;background:#555555;border-radius:5px;"></div>
<div class="a" style="left:1197.5px;top:976px;width:716.5px;height:22px;background:#444444;"></div>
<div class="a" style="left:1203.5px;top:978.5px;width:17.5px;height:17px;background:#2b2b2b;border-radius:4px;border:1px solid #252525;box-sizing:border-box;box-shadow:inset 0 1px 0 rgba(255,255,255,0.13);"></div>
<svg class="a" style="left:1203.5px;top:978.5px;" width="18" height="17" viewBox="0 0 18 17"><path d="M3 4h12M3 8h12" stroke="#e0e0e0" stroke-width="1.600"/><path d="M3 12h2.500M7.500 12h2.500M12 12h1.500" stroke="#e0e0e0" stroke-width="1.600"/><path d="M17 16h-3l3-3z" fill="#5fd3a0"/></svg>
<div class="a" style="left:1224px;top:979px;width:150px;height:16px;background:#2b2b2b;border-radius:3px;"></div>
<div class="a t" style="left:1226.5px;top:980px;height:16px;line-height:16px;color:#f0f0f0;letter-spacing:-0.12px;">Default Keyframe Layer</div>
<div class="a" style="left:1380.5px;top:979px;width:69.5px;height:16px;background:#2b2b2b;border-radius:3px;"></div>
<div class="a t" style="left:1386px;top:980px;height:16px;line-height:16px;color:#505050;">F</div>
<div class="a t" style="left:1397px;top:980px;height:16px;line-height:16px;color:#d0d0d0;">-</div>
<div class="a t" style="left:1456px;top:978px;height:20px;line-height:20px;color:#f0f0f0;letter-spacing:-0.00px;">Align:</div>
<div class="a" style="left:1492.5px;top:978px;width:18px;height:18px;background:#2b2b2b;border-radius:3px;border:1px solid #252525;box-sizing:border-box;box-shadow:inset 0 1px 0 rgba(255,255,255,0.13);"></div>
<svg class="a" style="left:1492.5px;top:978px;" width="18" height="18" viewBox="0 0 18 18"><path d="M3 2.500v12" stroke="#e8e8e8" stroke-width="1"/><rect x="5.500" y="4.500" width="2" height="2" fill="#6fdcc0"/><rect x="5.500" y="10.500" width="2" height="2" fill="#6fdcc0"/><path d="M9 5.500h3M9 11.500h7" stroke="#e8e8e8" stroke-width="1.600"/></svg>
<div class="a" style="left:1510px;top:978px;width:17.5px;height:18px;background:#2b2b2b;border-radius:3px;border:1px solid #252525;box-sizing:border-box;box-shadow:inset 0 1px 0 rgba(255,255,255,0.13);"></div>
<svg class="a" style="left:1510px;top:978px;" width="17.5" height="18" viewBox="0 0 17.5 18"><path d="M9 2.500v12" stroke="#e8e8e8" stroke-width="1"/><rect x="8" y="4.500" width="2" height="2" fill="#6fdcc0"/><rect x="8" y="10.500" width="2" height="2" fill="#6fdcc0"/><path d="M5.500 5.500h1.800M10.800 5.500h1.800M3.500 11.500h3.800M10.800 11.500h3.800" stroke="#e8e8e8" stroke-width="1.600"/></svg>
<div class="a" style="left:1527.5px;top:978px;width:18px;height:18px;background:#2b2b2b;border-radius:3px;border:1px solid #252525;box-sizing:border-box;box-shadow:inset 0 1px 0 rgba(255,255,255,0.13);"></div>
<svg class="a" style="left:1527.5px;top:978px;" width="18" height="18" viewBox="0 0 18 18"><path d="M15 2.500v12" stroke="#e8e8e8" stroke-width="1"/><rect x="10.500" y="4.500" width="2" height="2" fill="#6fdcc0"/><rect x="10.500" y="10.500" width="2" height="2" fill="#6fdcc0"/><path d="M6 5.500h3M2 11.500h7" stroke="#e8e8e8" stroke-width="1.600"/></svg>
<div class="a" style="left:1550px;top:978px;width:16.5px;height:18px;background:#2b2b2b;border-radius:3px;border:1px solid #252525;box-sizing:border-box;box-shadow:inset 0 1px 0 rgba(255,255,255,0.10);"></div>
<div class="a" style="left:1551px;top:979px;width:14.5px;height:16px;background:#3e3e3e;border-radius:2px;"></div>
<svg class="a" style="left:1550px;top:978px;" width="16.5" height="18" viewBox="0 0 16.5 18"><rect x="3.500" y="4" width="9.500" height="9.500" fill="none" stroke="#b0b0b0" stroke-width="1" stroke-dasharray="2.500 1.500"/><rect x="2.300" y="2.800" width="2.400" height="2.400" fill="#c8c8c8"/><rect x="11.800" y="2.800" width="2.400" height="2.400" fill="#c8c8c8"/><rect x="2.300" y="12.300" width="2.400" height="2.400" fill="#c8c8c8"/><rect x="11.800" y="12.300" width="2.400" height="2.400" fill="#c8c8c8"/><rect x="7.500" y="8" width="1.600" height="1.600" fill="#e8e8e8"/></svg>
<div class="a" style="left:1570.5px;top:978px;width:30.5px;height:18px;background:#2b2b2b;border-radius:3px;border:1px solid #252525;box-sizing:border-box;box-shadow:inset 0 1px 0 rgba(255,255,255,0.10);"></div>
<div class="a" style="left:1571.5px;top:979px;width:17.5px;height:16px;background:#3e3e3e;border-radius:2px 0 0 2px;"></div>
<svg class="a" style="left:1570.5px;top:978px;" width="30.5" height="18" viewBox="0 0 30.5 18"><g transform="translate(1.600 1.300) scale(0.820) rotate(40 9.500 9.500)"><path d="M5.500 15V9A4 4 0 0 1 13.500 9V15" fill="none" stroke="#e4e4e4" stroke-width="2.300"/><path d="M4.350 13.500h2.300M12.350 13.500h2.300" stroke="#6a6a6a" stroke-width="0.800"/></g><path d="M22 5.500l5 3.500-5 3.500z" fill="none" stroke="#8a8a8a" stroke-width="1"/></svg>
<div class="a" style="left:1605.5px;top:978px;width:30.5px;height:18px;background:#2b2b2b;border-radius:3px;border:1px solid #252525;box-sizing:border-box;box-shadow:inset 0 1px 0 rgba(255,255,255,0.10);"></div>
<div class="a" style="left:1606.5px;top:979px;width:17.5px;height:16px;background:#3e3e3e;border-radius:2px 0 0 2px;"></div>
<svg class="a" style="left:1605.5px;top:978px;" width="30.5" height="18" viewBox="0 0 30.5 18"><path d="M2.500 9.500h3M6.500 7v5M9 3v13M11.500 7.500v4M12.500 9.500h4" stroke="#e8e8e8" stroke-width="1" fill="none"/><path d="M22 5.500l5 3.500-5 3.500z" fill="none" stroke="#8a8a8a" stroke-width="1"/></svg>
<svg class="a" style="left:1743px;top:980px;" width="15" height="15" viewBox="0 0 15 15"><circle cx="6" cy="6" r="5" fill="none" stroke="#d0d0d0" stroke-width="1.100"/><path d="M3.500 6h5" stroke="#d0d0d0" stroke-width="1.100"/><path d="M10 10L14 14" stroke="#d0d0d0" stroke-width="1.500"/></svg>
<div class="a" style="left:1767px;top:985.5px;width:114px;height:3px;background:#555555;border-radius:2px;"></div>
<svg class="a" style="left:1761px;top:981px;" width="12" height="12" viewBox="0 0 12 12"><circle cx="6" cy="6" r="5.200" fill="#7ad4b8" stroke="#2a2a2a" stroke-width="1"/><circle cx="6" cy="6" r="1.800" fill="#5ab898"/></svg>
<svg class="a" style="left:1887.5px;top:980px;" width="15" height="15" viewBox="0 0 15 15"><circle cx="6" cy="6" r="5" fill="none" stroke="#d0d0d0" stroke-width="1.100"/><path d="M3.500 6h5M6 3.500v5" stroke="#d0d0d0" stroke-width="1.100"/><path d="M10 10L14 14" stroke="#d0d0d0" stroke-width="1.500"/></svg>
<div class="a" style="left:494px;top:1004px;width:1420px;height:22px;background:#3c3c3c;"></div>
<div class="a" style="left:498px;top:1009.5px;width:2px;height:2px;background:#8a8a8a;"></div>
<div class="a" style="left:498px;top:1013.5px;width:2px;height:2px;background:#8a8a8a;"></div>
<div class="a" style="left:498px;top:1017.5px;width:2px;height:2px;background:#8a8a8a;"></div>
<div class="a" style="left:507.5px;top:1006px;width:17px;height:17px;background:#2b2b2b;border-radius:4px;border:1px solid #252525;box-sizing:border-box;box-shadow:inset 0 1px 0 rgba(255,255,255,0.13);"></div>
<svg class="a" style="left:507.5px;top:1006px;" width="17" height="17" viewBox="0 0 17 17"><path d="M3 3.500h11v7.500h-3v2.500l-2.500-2.500h-5.500z" fill="#e0e0e0"/><path d="M4.500 5.500h8M4.500 7.300h8M4.500 9.100h8" stroke="#2b2b2b" stroke-width="0.800"/><path d="M16.500 16.500h-3l3-3z" fill="#5fd3a0"/></svg>
<div class="a" style="left:528px;top:1008px;width:18.5px;height:14px;background:#d8c46a;border-radius:2px;"></div>
<div class="a t" style="left:533.5px;top:1008.5px;height:14px;line-height:14px;color:#5a4a10;">0</div>
<div class="a" style="left:553.8px;top:1011.7px;width:6.6px;height:6.6px;background:#d8c46a;border-radius:3.3px;"></div>
<div class="a t" style="left:565px;top:1006px;height:20px;line-height:20px;color:#f0f0f0;letter-spacing:-0.30px;">You are working in an unsaved scene.</div>
<div class="a" style="left:1477px;top:1006.5px;width:80px;height:17px;background:#d9c46a;border-radius:2px;"></div>
<div class="a t" style="left:1483px;top:1007.5px;height:17px;line-height:17px;color:#2a2a2a;letter-spacing:-0.53px;">Feedback</div>
<div class="a t" style="left:1539px;top:1006.500px;height:17px;line-height:17px;font-size:11px;font-family:'DejaVu Sans',sans-serif;">&#128221;</div>
<div class="a" style="left:1560px;top:1006.5px;width:109px;height:17px;background:#2ecc71;border-radius:2px;"></div>
<div class="a t" style="left:1566px;top:1007.5px;height:17px;line-height:17px;color:#1a1a1a;letter-spacing:-0.22px;">Upgrade to Pro</div>
<div class="a t" style="left:1648px;top:1006.500px;height:17px;line-height:17px;font-size:11px;font-family:'DejaVu Sans',sans-serif;">&#128588;</div>
<div class="a" style="left:1672px;top:1006.5px;width:129.5px;height:17px;background:#bb8cf5;border-radius:2px;"></div>
<div class="a t" style="left:1677.5px;top:1007.5px;height:17px;line-height:17px;color:#1a1a1a;letter-spacing:-0.16px;">New Beta Available</div>
<div class="a t" style="left:1783px;top:1006.500px;height:17px;line-height:17px;font-size:11px;font-family:'DejaVu Sans',sans-serif;">&#129395;</div>
<div class="a" style="left:1805px;top:1006.5px;width:106.5px;height:17px;background:#3a9ff5;border-radius:2px;"></div>
<div class="a t" style="left:1810.5px;top:1007.5px;height:17px;line-height:17px;color:#1a1a1a;letter-spacing:-0.30px;">Tips and Tricks</div>
<div class="a t" style="left:1890px;top:1006.500px;height:17px;line-height:17px;font-size:11px;font-family:'DejaVu Sans',sans-serif;">&#128640;</div>
<div class="a" style="left:1094px;top:626px;width:101px;height:31px;border-radius:1px;border:3px solid #b4e61e;box-sizing:border-box;"></div>
<div class="a" style="left:627px;top:713px;width:555px;height:28px;border-radius:1px;border:3px solid #b4e61e;box-sizing:border-box;"></div>
</body></html>
